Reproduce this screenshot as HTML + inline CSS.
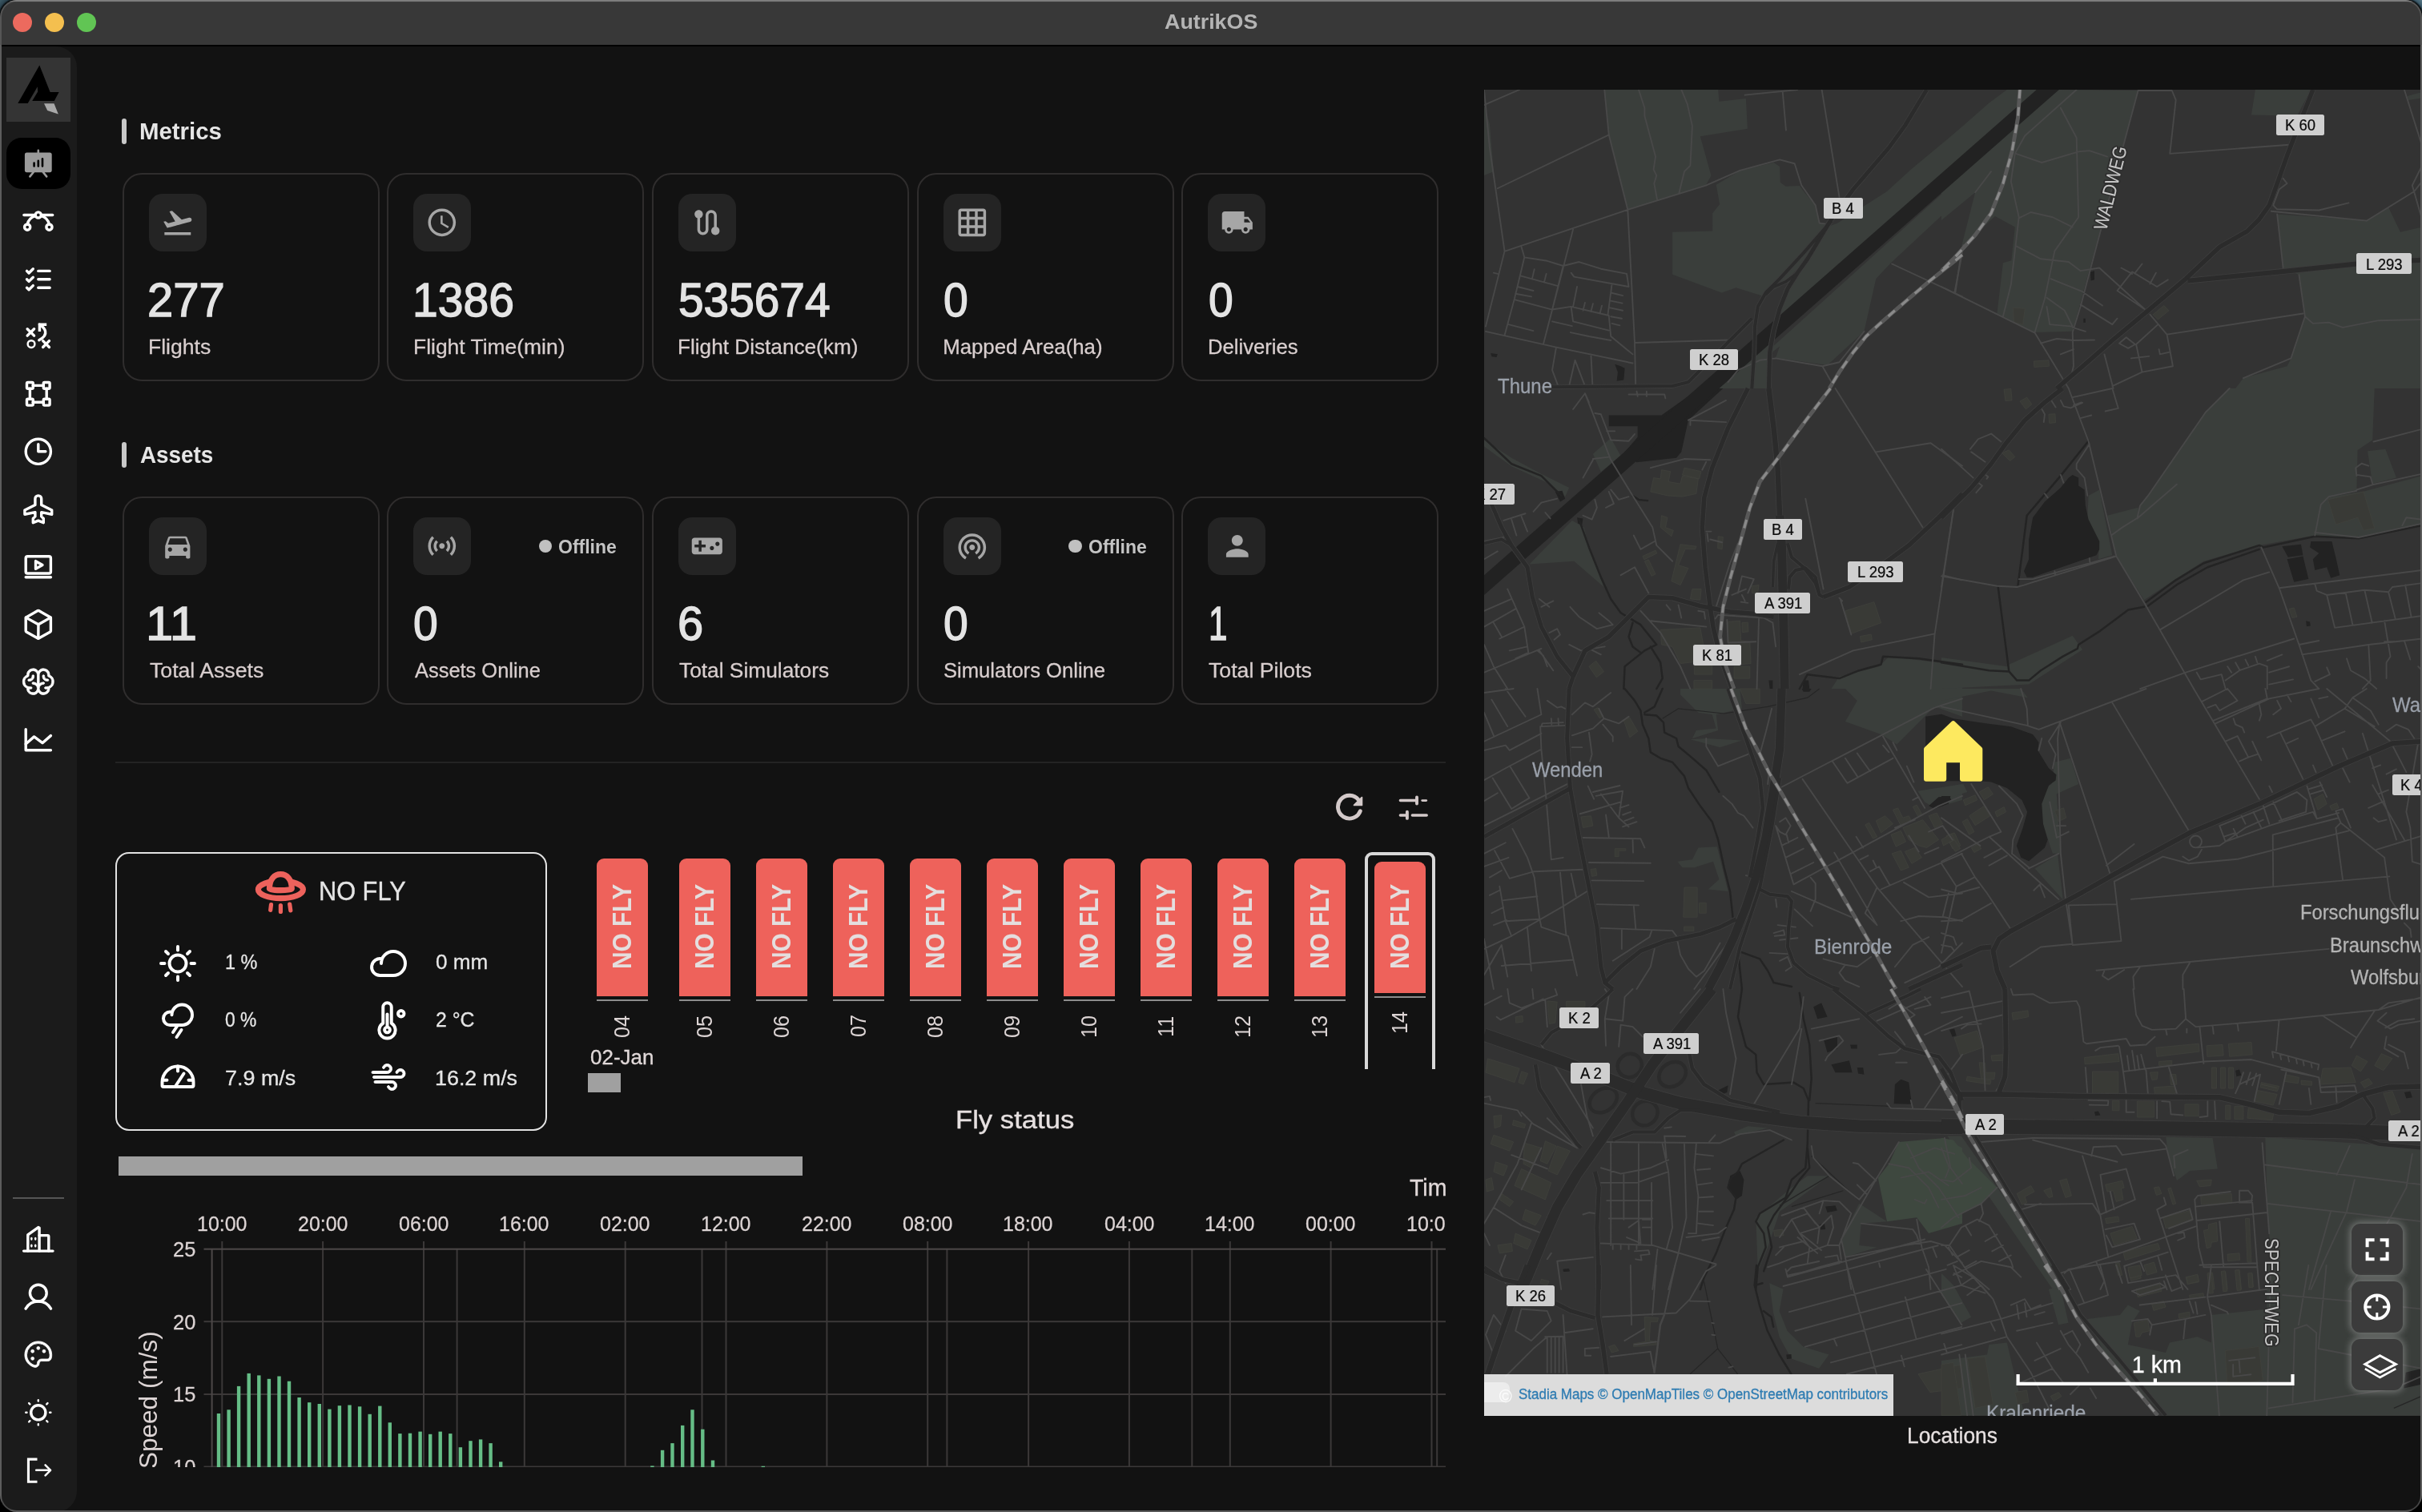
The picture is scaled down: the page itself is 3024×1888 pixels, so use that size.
<!DOCTYPE html>
<html lang="en"><head><meta charset="utf-8"><title>AutrikOS</title>
<style>
html,body{margin:0;padding:0;background:#000;}
body{width:3024px;height:1888px;position:relative;overflow:hidden;font-family:"Liberation Sans", sans-serif;}
.b{position:absolute;box-sizing:border-box;}
.t{position:absolute;white-space:nowrap;transform-origin:0 0;margin:0;padding:0;}
.ic{position:absolute;overflow:visible;}
#win{will-change:transform;position:absolute;left:0;top:0;width:3024px;height:1888px;border-radius:21px;overflow:hidden;background:#121212;}
#clipL{position:absolute;left:0;top:0;width:1805px;height:1888px;overflow:hidden;}
#chart{position:absolute;left:0;top:0;width:1805px;height:1832px;overflow:hidden;}
</style></head><body>
<div class="b" style="left:0px;top:0px;width:40px;height:40px;background:radial-gradient(circle at 21px 21px,#000 21px,#2c4450 24px,#3f5c68 30px);"></div><div class="b" style="left:2984px;top:0px;width:40px;height:40px;background:radial-gradient(circle at 19px 21px,#000 21px,#3a5868 24px,#5a7c8c 30px);"></div><div id="win"><div class="b" style="left:0px;top:0px;width:3024px;height:56px;background:linear-gradient(#9a9a9a 0px,#8a8a8a 1.5px,#3c3c3c 2.5px,#383838 4px);"></div><div class="b" style="left:0px;top:56px;width:3024px;height:2px;background:#000;"></div><div class="b" style="left:16px;top:16px;width:24px;height:24px;background:#ec6a5e;border-radius:50%;"></div><div class="b" style="left:56px;top:16px;width:24px;height:24px;background:#f4bf4f;border-radius:50%;"></div><div class="b" style="left:96px;top:16px;width:24px;height:24px;background:#61c554;border-radius:50%;"></div><span class="t " style="left:1454.03px;top:14.40px;font-size:26.52px;line-height:26.52px;color:#b4b4b4;font-weight:700;transform:scaleX(1.0119);">AutrikOS</span><div class="b" style="left:0px;top:58px;width:96px;height:1830px;background:#1b1b1b;border-radius:0 26px 26px 0;"></div><div class="b" style="left:8px;top:72px;width:80px;height:80px;background:#343434;"></div><svg class="ic" style="left:8px;top:72px" width="80" height="80" viewBox="0 0 80 80"><path fill="#000" d="M41.3,9.4 L54.6,43 L65.6,43 L59.8,54 L32.2,54 L39.2,42.5 L38.8,36.3 L26.7,57 L14.3,57 Z"/><path fill="#a9a9a9" d="M47,57.3 L59.5,57.3 L64.8,70.5 L51.2,66 Z"/></svg><div class="b" style="left:8px;top:172px;width:80px;height:64px;background:#000;border-radius:19px;"></div><svg class="ic" style="left:27.20px;top:183.80px;color:#9a9a9a" width="41.6" height="41.6" viewBox="0 0 256 256"><path fill="currentColor" d="M216,40H136V24a8,8,0,0,0-16,0V40H40A16,16,0,0,0,24,56V176a16,16,0,0,0,16,16H79.36L57.75,219a8,8,0,0,0,12.5,10l29.59-37h56.32l29.59,37a8,8,0,1,0,12.5-10l-21.61-27H216a16,16,0,0,0,16-16V56A16,16,0,0,0,216,40ZM104,144a8,8,0,0,1-16,0V120a8,8,0,0,1,16,0Zm32,0a8,8,0,0,1-16,0V104a8,8,0,0,1,16,0Zm32,0a8,8,0,0,1-16,0V88a8,8,0,0,1,16,0Z"/></svg><svg class="ic" style="left:27.20px;top:255.20px;color:#fff" width="41.6" height="41.6" viewBox="0 0 256 256"><g fill="none" stroke="currentColor" stroke-width="21" stroke-linecap="round" stroke-linejoin="round"><line x1="18" y1="83" x2="238" y2="83"/><circle cx="128" cy="83" r="22" fill="#1b1b1b"/><circle cx="44" cy="176" r="22"/><circle cx="212" cy="176" r="22"/><path d="M151.1,89.5A88.2,88.2,0,0,1,212,154"/><path d="M44,154a88.2,88.2,0,0,1,60.9-64.5"/></g></svg><svg class="ic" style="left:27.20px;top:327.80px;color:#fff" width="41.6" height="41.6" viewBox="0 0 256 256"><g fill="none" stroke="currentColor" stroke-width="21" stroke-linecap="round" stroke-linejoin="round"><line x1="128" y1="128" x2="216" y2="128"/><line x1="128" y1="64" x2="216" y2="64"/><line x1="128" y1="192" x2="216" y2="192"/><polyline points="40 64 56 80 88 48"/><polyline points="40 128 56 144 88 112"/><polyline points="40 192 56 208 88 176"/></g></svg><svg class="ic" style="left:27.20px;top:399.20px;color:#fff" width="41.6" height="41.6" viewBox="0 0 256 256"><g fill="none" stroke="currentColor" stroke-width="21" stroke-linecap="round" stroke-linejoin="round"><circle cx="74" cy="188" r="27" stroke-width="15"/><line x1="44" y1="72" x2="96" y2="124"/><line x1="96" y1="72" x2="44" y2="124"/><line x1="164" y1="164" x2="212" y2="212"/><line x1="212" y1="164" x2="164" y2="212"/><polyline points="138 92 138 38 192 38" stroke-linejoin="miter" stroke-linecap="butt"/><path d="M138,38 C174,60 220,114 134,158"/></g></svg><svg class="ic" style="left:27.20px;top:471.20px;color:#fff" width="41.6" height="41.6" viewBox="0 0 256 256"><g fill="none" stroke="currentColor" stroke-width="21" stroke-linecap="round" stroke-linejoin="round"><rect x="168" y="40" width="48" height="48" rx="8"/><rect x="40" y="40" width="48" height="48" rx="8"/><rect x="168" y="168" width="48" height="48" rx="8"/><rect x="40" y="168" width="48" height="48" rx="8"/><line x1="64" y1="168" x2="64" y2="88"/><line x1="168" y1="192" x2="88" y2="192"/><line x1="192" y1="88" x2="192" y2="168"/><line x1="88" y1="64" x2="168" y2="64"/></g></svg><svg class="ic" style="left:27.20px;top:543.20px;color:#fff" width="41.6" height="41.6" viewBox="0 0 256 256"><g fill="none" stroke="currentColor" stroke-width="21" stroke-linecap="round" stroke-linejoin="round"><circle cx="128" cy="128" r="96"/><polyline points="128 72 128 128 184 128"/></g></svg><svg class="ic" style="left:27.20px;top:615.20px;color:#fff" width="41.6" height="41.6" viewBox="0 0 256 256"><g fill="none" stroke="currentColor" stroke-width="21" stroke-linecap="round" stroke-linejoin="round"><path d="M128,24a24,24,0,0,0-24,24V96L24,136v32l80-16v32L88,200v32l40-16,40,16V200l-16-16V152l80,16V136L152,96V48A24,24,0,0,0,128,24Z"/></g></svg><svg class="ic" style="left:27.20px;top:687.20px;color:#fff" width="41.6" height="41.6" viewBox="0 0 256 256"><g fill="none" stroke="currentColor" stroke-width="21" stroke-linecap="round" stroke-linejoin="round"><rect x="32" y="48" width="192" height="130" rx="14"/><line x1="32" y1="208" x2="224" y2="208"/><path d="M108,84v60l52-30Z"/></g></svg><svg class="ic" style="left:27.20px;top:759.20px;color:#fff" width="41.6" height="41.6" viewBox="0 0 256 256"><g fill="none" stroke="currentColor" stroke-width="21" stroke-linecap="round" stroke-linejoin="round"><path d="M224,177.32V78.68a8,8,0,0,0-4.07-7L132,22.18a8,8,0,0,0-7.94,0l-88,49.5a8,8,0,0,0-4.07,7v98.64a8,8,0,0,0,4.07,7l88,49.5a8,8,0,0,0,7.94,0l88-49.5A8,8,0,0,0,224,177.32Z"/><polyline points="222.9 74.6 128.9 128 33.1 74.6"/><line x1="128.9" y1="128" x2="128" y2="234.8"/></g></svg><svg class="ic" style="left:27.20px;top:831.20px;color:#fff" width="41.6" height="41.6" viewBox="0 0 256 256"><path fill="currentColor" stroke="currentColor" stroke-width="5" stroke-linejoin="round" d="M248,124a56.11,56.11,0,0,0-32-50.61V72a48,48,0,0,0-88-26.49A48,48,0,0,0,40,72v1.39a56,56,0,0,0,0,101.2V176a48,48,0,0,0,88,26.49A48,48,0,0,0,216,176v-1.41A56.09,56.09,0,0,0,248,124ZM88,208a32,32,0,0,1-31.81-28.56A55.87,55.87,0,0,0,64,180h8a8,8,0,0,0,0-16H64A40,40,0,0,1,50.67,86.27,8,8,0,0,0,56,78.73V72a32,32,0,0,1,64,0v68.26A47.8,47.8,0,0,0,88,128a8,8,0,0,0,0,16,32,32,0,0,1,0,64Zm104-44h-8a8,8,0,0,0,0,16h8a55.87,55.87,0,0,0,7.81-.56A32,32,0,1,1,168,144a8,8,0,0,0,0-16,47.8,47.8,0,0,0-32,12.26V72a32,32,0,0,1,64,0v6.73a8,8,0,0,0,5.33,7.54A40,40,0,0,1,192,164Zm16-52a8,8,0,0,1-8,8h-4a36,36,0,0,1-36-36V80a8,8,0,0,1,16,0v4a20,20,0,0,0,20,20h4A8,8,0,0,1,208,112ZM60,120H56a8,8,0,0,1,0-16h4A20,20,0,0,0,80,84V80a8,8,0,0,1,16,0v4A36,36,0,0,1,60,120Z"/></svg><svg class="ic" style="left:27.20px;top:903.20px;color:#fff" width="41.6" height="41.6" viewBox="0 0 256 256"><g fill="none" stroke="currentColor" stroke-width="21" stroke-linecap="round" stroke-linejoin="round"><polyline points="224 208 32 208 32 48"/><polyline points="224 96 160 152 96 104 32 160"/></g></svg><div class="b" style="left:16px;top:1495px;width:64px;height:2px;background:#555;"></div><svg class="ic" style="left:27.20px;top:1527.20px;color:#fff" width="41.6" height="41.6" viewBox="0 0 256 256"><g fill="none" stroke="currentColor" stroke-width="21" stroke-linecap="round" stroke-linejoin="round"><line x1="16" y1="216" x2="240" y2="216"/><path d="M48,216V92L128,34l8,4V216"/><path d="M136,96h64a8,8,0,0,1,8,8V216"/></g><g fill="currentColor"><ellipse cx="76" cy="122" rx="8" ry="13"/><ellipse cx="106" cy="122" rx="8" ry="13"/><ellipse cx="76" cy="176" rx="8" ry="13"/><ellipse cx="106" cy="176" rx="8" ry="13"/></g></svg><svg class="ic" style="left:27.20px;top:1599.20px;color:#fff" width="41.6" height="41.6" viewBox="0 0 256 256"><g fill="none" stroke="currentColor" stroke-width="21" stroke-linecap="round" stroke-linejoin="round"><circle cx="128" cy="96" r="64"/><path d="M31,216a112,112,0,0,1,194,0"/></g></svg><svg class="ic" style="left:27.20px;top:1671.20px;color:#fff" width="41.6" height="41.6" viewBox="0 0 256 256"><path fill="currentColor" stroke="currentColor" stroke-width="5" stroke-linejoin="round" d="M200.77,53.89A103.27,103.27,0,0,0,128,24h-1.07A104,104,0,0,0,24,128c0,43,26.58,79.06,69.36,94.17A32,32,0,0,0,136,192a16,16,0,0,1,16-16h46.21a31.81,31.81,0,0,0,31.2-24.88,104.43,104.43,0,0,0,2.59-24A103.28,103.28,0,0,0,200.77,53.89Zm13,93.71A15.89,15.89,0,0,1,198.21,160H152a32,32,0,0,0-32,32,16,16,0,0,1-21.31,15.07C62.49,194.3,40,164,40,128a88,88,0,0,1,87.09-88h.9a88.35,88.35,0,0,1,88,87.25A88.86,88.86,0,0,1,213.81,147.6ZM140,76a12,12,0,1,1-12-12A12,12,0,0,1,140,76ZM96,100A12,12,0,1,1,84,88,12,12,0,0,1,96,100Zm0,56a12,12,0,1,1-12-12A12,12,0,0,1,96,156Zm88-56a12,12,0,1,1-12-12A12,12,0,0,1,184,100Z"/></svg><svg class="ic" style="left:27.20px;top:1743.20px;color:#fff" width="41.6" height="41.6" viewBox="0 0 256 256"><g fill="none" stroke="currentColor" stroke-width="21" stroke-linecap="round" stroke-linejoin="round"><circle cx="128" cy="128" r="56"/><g stroke-width="14.5"><line x1="128" y1="40" x2="128" y2="32"/><line x1="64" y1="64" x2="56" y2="56"/><line x1="40" y1="128" x2="32" y2="128"/><line x1="64" y1="192" x2="56" y2="200"/><line x1="128" y1="216" x2="128" y2="224"/><line x1="192" y1="192" x2="200" y2="200"/><line x1="216" y1="128" x2="224" y2="128"/><line x1="192" y1="64" x2="200" y2="56"/></g></g></svg><svg class="ic" style="left:27.20px;top:1815.20px;color:#fff" width="41.6" height="41.6" viewBox="0 0 256 256"><g fill="none" stroke="currentColor" stroke-width="19" stroke-linecap="butt" stroke-linejoin="miter"><polyline points="120 44 52 44 52 217 120 217"/></g><g fill="none" stroke="currentColor" stroke-width="15.5" stroke-linecap="round" stroke-linejoin="round"><polyline points="182 88 222 128 182 168"/><line x1="112" y1="128" x2="220" y2="128"/></g></svg><div id="clipL"><div class="b" style="left:152px;top:148px;width:6px;height:32px;background:#c8c8c8;border-radius:3px;"></div><span class="t " style="left:173.59px;top:149.00px;font-size:29.28px;line-height:29.28px;color:#e6e6e6;font-weight:700;transform:scaleX(1.0041);">Metrics</span><div class="b" style="left:152px;top:552px;width:6px;height:32px;background:#c8c8c8;border-radius:3px;"></div><span class="t " style="left:174.80px;top:553.00px;font-size:29.28px;line-height:29.28px;color:#e6e6e6;font-weight:700;transform:scaleX(0.9509);">Assets</span><div class="b" style="left:152.5px;top:216px;width:321px;height:260px;border:2px solid #2f2d2d;border-radius:24px;"></div><div class="b" style="left:185.5px;top:242px;width:72px;height:72px;background:#242424;border-radius:17px;"></div><svg class="ic" style="left:200.70px;top:257.20px" width="41.6" height="41.6" viewBox="0 0 24 24"><path fill="#a6a6a6" d="M2.5 19h19v2h-19v-2zm19.57-9.36c-.21-.8-1.04-1.28-1.84-1.06L14.92 10l-6.9-6.43-1.93.51 4.14 7.17-4.97 1.33-1.97-1.54-1.45.39 2.59 4.49s7.12-1.9 16.57-4.43c.81-.23 1.28-1.05 1.07-1.85z"/></svg><span class="t " style="left:184.20px;top:344.80px;font-size:59.16px;line-height:59.16px;color:#e4e4e4;-webkit-text-stroke:1.4px #e4e4e4;transform:scaleX(0.9796);">277</span><span class="t " style="left:185.02px;top:421.00px;font-size:25.80px;line-height:25.80px;color:#d8cece;-webkit-text-stroke:0.28px #d8cece;transform:scaleX(1.0290);">Flights</span><div class="b" style="left:483.2px;top:216px;width:321px;height:260px;border:2px solid #2f2d2d;border-radius:24px;"></div><div class="b" style="left:516.2px;top:242px;width:72px;height:72px;background:#242424;border-radius:17px;"></div><svg class="ic" style="left:531.40px;top:257.20px" width="41.6" height="41.6" viewBox="0 0 24 24"><path fill="#a6a6a6" d="M11.99 2C6.47 2 2 6.48 2 12s4.47 10 9.99 10C17.52 22 22 17.52 22 12S17.52 2 11.99 2zM12 20c-4.42 0-8-3.58-8-8s3.58-8 8-8 8 3.58 8 8-3.58 8-8 8zm.5-13H11v6l5.25 3.15.75-1.23-4.5-2.67z"/></svg><span class="t " style="left:515.42px;top:344.80px;font-size:59.16px;line-height:59.16px;color:#e4e4e4;-webkit-text-stroke:1.4px #e4e4e4;transform:scaleX(0.9645);">1386</span><span class="t " style="left:515.73px;top:421.00px;font-size:25.80px;line-height:25.80px;color:#d8cece;-webkit-text-stroke:0.28px #d8cece;transform:scaleX(1.0248);">Flight Time(min)</span><div class="b" style="left:813.9px;top:216px;width:321px;height:260px;border:2px solid #2f2d2d;border-radius:24px;"></div><div class="b" style="left:846.9px;top:242px;width:72px;height:72px;background:#242424;border-radius:17px;"></div><svg class="ic" style="left:862.10px;top:257.20px" width="41.6" height="41.6" viewBox="0 0 24 24"><path fill="#a6a6a6" d="M19 15.18V7c0-2.21-1.79-4-4-4s-4 1.79-4 4v10c0 1.1-.9 2-2 2s-2-.9-2-2V8.82C8.16 8.4 9 7.3 9 6c0-1.66-1.34-3-3-3S3 4.34 3 6c0 1.3.84 2.4 2 2.82V17c0 2.21 1.79 4 4 4s4-1.79 4-4V7c0-1.1.9-2 2-2s2 .9 2 2v8.18c-1.16.41-2 1.51-2 2.82 0 1.66 1.34 3 3 3s3-1.34 3-3c0-1.3-.84-2.4-2-2.82z"/></svg><span class="t " style="left:846.63px;top:344.80px;font-size:59.16px;line-height:59.16px;color:#e4e4e4;-webkit-text-stroke:1.4px #e4e4e4;transform:scaleX(0.9598);">535674</span><span class="t " style="left:846.45px;top:421.00px;font-size:25.80px;line-height:25.80px;color:#d8cece;-webkit-text-stroke:0.28px #d8cece;transform:scaleX(1.0147);">Flight Distance(km)</span><div class="b" style="left:1144.6px;top:216px;width:321px;height:260px;border:2px solid #2f2d2d;border-radius:24px;"></div><div class="b" style="left:1177.6px;top:242px;width:72px;height:72px;background:#242424;border-radius:17px;"></div><svg class="ic" style="left:1192.80px;top:257.20px" width="41.6" height="41.6" viewBox="0 0 24 24"><path fill="#a6a6a6" d="M20 2H4c-1.1 0-2 .9-2 2v16c0 1.1.9 2 2 2h16c1.1 0 2-.9 2-2V4c0-1.1-.9-2-2-2zM8 20H4v-4h4v4zm0-6H4v-4h4v4zm0-6H4V4h4v4zm6 12h-4v-4h4v4zm0-6h-4v-4h4v4zm0-6h-4V4h4v4zm6 12h-4v-4h4v4zm0-6h-4v-4h4v4zm0-6h-4V4h4v4z"/></svg><span class="t " style="left:1177.89px;top:344.80px;font-size:59.16px;line-height:59.16px;color:#e4e4e4;-webkit-text-stroke:1.4px #e4e4e4;transform:scaleX(0.9332);">0</span><span class="t " style="left:1177.18px;top:421.00px;font-size:25.80px;line-height:25.80px;color:#d8cece;-webkit-text-stroke:0.28px #d8cece;">Mapped Area(ha)</span><div class="b" style="left:1475.3px;top:216px;width:321px;height:260px;border:2px solid #2f2d2d;border-radius:24px;"></div><div class="b" style="left:1508.3px;top:242px;width:72px;height:72px;background:#242424;border-radius:17px;"></div><svg class="ic" style="left:1523.50px;top:257.20px" width="41.6" height="41.6" viewBox="0 0 24 24"><path fill="#a6a6a6" d="M20 8h-3V4H3c-1.1 0-2 .9-2 2v11h2c0 1.66 1.34 3 3 3s3-1.34 3-3h6c0 1.66 1.34 3 3 3s3-1.34 3-3h2v-5l-3-4zM6 18.5c-.83 0-1.5-.67-1.5-1.5s.67-1.5 1.5-1.5 1.5.67 1.5 1.5-.67 1.5-1.5 1.5zm13.5-9l1.96 2.5H17V9.5h2.5zm-1.5 9c-.83 0-1.5-.67-1.5-1.5s.67-1.5 1.5-1.5 1.5.67 1.5 1.5-.67 1.5-1.5 1.5z"/></svg><span class="t " style="left:1508.59px;top:344.80px;font-size:59.16px;line-height:59.16px;color:#e4e4e4;-webkit-text-stroke:1.4px #e4e4e4;transform:scaleX(0.9332);">0</span><span class="t " style="left:1507.89px;top:421.00px;font-size:25.80px;line-height:25.80px;color:#d8cece;-webkit-text-stroke:0.28px #d8cece;transform:scaleX(0.9949);">Deliveries</span><div class="b" style="left:152.5px;top:620px;width:321px;height:260px;border:2px solid #2f2d2d;border-radius:24px;"></div><div class="b" style="left:185.5px;top:646px;width:72px;height:72px;background:#242424;border-radius:17px;"></div><svg class="ic" style="left:200.70px;top:661.20px" width="41.6" height="41.6" viewBox="0 0 24 24"><path fill="#a6a6a6" d="M18.92 6.01C18.72 5.42 18.16 5 17.5 5h-11c-.66 0-1.21.42-1.42 1.01L3 12v8c0 .55.45 1 1 1h1c.55 0 1-.45 1-1v-1h12v1c0 .55.45 1 1 1h1c.55 0 1-.45 1-1v-8l-2.08-5.99zM6.5 16c-.83 0-1.5-.67-1.5-1.5S5.67 13 6.5 13s1.5.67 1.5 1.5S7.33 16 6.5 16zm11 0c-.83 0-1.5-.67-1.5-1.5s.67-1.5 1.5-1.5 1.5.67 1.5 1.5-.67 1.5-1.5 1.5zM5 11l1.5-4.5h11L19 11H5z"/></svg><span class="t " style="left:182.08px;top:748.80px;font-size:59.16px;line-height:59.16px;color:#e4e4e4;-webkit-text-stroke:1.4px #e4e4e4;transform:scaleX(1.0419);">11</span><span class="t " style="left:186.61px;top:825.00px;font-size:25.80px;line-height:25.80px;color:#d8cece;-webkit-text-stroke:0.28px #d8cece;transform:scaleX(1.0331);">Total Assets</span><div class="b" style="left:483.2px;top:620px;width:321px;height:260px;border:2px solid #2f2d2d;border-radius:24px;"></div><div class="b" style="left:516.2px;top:646px;width:72px;height:72px;background:#242424;border-radius:17px;"></div><svg class="ic" style="left:531.40px;top:661.20px" width="41.6" height="41.6" viewBox="0 0 24 24"><path fill="#a6a6a6" d="M7.76 16.24C6.67 15.16 6 13.66 6 12s.67-3.16 1.76-4.24l1.42 1.42C8.45 9.9 8 10.9 8 12c0 1.1.45 2.1 1.17 2.83l-1.41 1.41zm8.48 0C17.33 15.16 18 13.66 18 12s-.67-3.16-1.76-4.24l-1.42 1.42C15.55 9.9 16 10.9 16 12c0 1.1-.45 2.1-1.17 2.83l1.41 1.41zM12 10c-1.1 0-2 .9-2 2s.9 2 2 2 2-.9 2-2-.9-2-2-2zm8 2c0 2.21-.9 4.21-2.35 5.65l1.42 1.42C20.88 17.26 22 14.76 22 12s-1.12-5.26-2.93-7.07l-1.42 1.42C19.1 7.79 20 9.79 20 12zM6.35 6.35L4.93 4.93C3.12 6.74 2 9.24 2 12s1.12 5.26 2.93 7.07l1.42-1.42C4.9 16.21 4 14.21 4 12s.9-4.21 2.35-5.65z"/></svg><span class="t " style="left:516.49px;top:748.80px;font-size:59.16px;line-height:59.16px;color:#e4e4e4;-webkit-text-stroke:1.4px #e4e4e4;transform:scaleX(0.9332);">0</span><span class="t " style="left:517.84px;top:825.00px;font-size:25.80px;line-height:25.80px;color:#d8cece;-webkit-text-stroke:0.28px #d8cece;transform:scaleX(0.9855);">Assets Online</span><div class="b" style="left:672.7px;top:673.7px;width:16.6px;height:16.6px;background:#c0c0c0;border-radius:50%;"></div><span class="t " style="left:697.48px;top:671.50px;font-size:23.19px;line-height:23.19px;color:#c4c4c4;font-weight:700;transform:scaleX(0.9923);">Offline</span><div class="b" style="left:813.9px;top:620px;width:321px;height:260px;border:2px solid #2f2d2d;border-radius:24px;"></div><div class="b" style="left:846.9px;top:646px;width:72px;height:72px;background:#242424;border-radius:17px;"></div><svg class="ic" style="left:862.10px;top:661.20px" width="41.6" height="41.6" viewBox="0 0 24 24"><path fill="#a6a6a6" d="M21 6H3c-1.1 0-2 .9-2 2v8c0 1.1.9 2 2 2h18c1.1 0 2-.9 2-2V8c0-1.1-.9-2-2-2zm-10 7H8v3H6v-3H3v-2h3V8h2v3h3v2zm4.5 2c-.83 0-1.5-.67-1.5-1.5s.67-1.5 1.5-1.5 1.5.67 1.5 1.5-.67 1.5-1.5 1.5zm4-3c-.83 0-1.5-.67-1.5-1.5S18.67 9 19.5 9s1.5.67 1.5 1.5-.67 1.5-1.5 1.5z"/></svg><span class="t " style="left:846.31px;top:748.80px;font-size:59.16px;line-height:59.16px;color:#e4e4e4;-webkit-text-stroke:1.4px #e4e4e4;transform:scaleX(0.9778);">6</span><span class="t " style="left:848.01px;top:825.00px;font-size:25.80px;line-height:25.80px;color:#d8cece;-webkit-text-stroke:0.28px #d8cece;transform:scaleX(1.0197);">Total Simulators</span><div class="b" style="left:1144.6px;top:620px;width:321px;height:260px;border:2px solid #2f2d2d;border-radius:24px;"></div><div class="b" style="left:1177.6px;top:646px;width:72px;height:72px;background:#242424;border-radius:17px;"></div><svg class="ic" style="left:1192.80px;top:661.20px" width="41.6" height="41.6" viewBox="0 0 24 24"><path fill="#a6a6a6" d="M12 11c-1.1 0-2 .9-2 2s.9 2 2 2 2-.9 2-2-.9-2-2-2zm6 2c0-3.31-2.69-6-6-6s-6 2.69-6 6c0 2.22 1.21 4.15 3 5.19l1-1.74c-1.19-.7-2-1.97-2-3.45 0-2.21 1.79-4 4-4s4 1.79 4 4c0 1.48-.81 2.75-2 3.45l1 1.74c1.79-1.04 3-2.97 3-5.19zM12 3C6.48 3 2 7.48 2 13c0 3.7 2.01 6.92 4.99 8.65l1-1.73C5.61 18.53 4 15.96 4 13c0-4.42 3.58-8 8-8s8 3.58 8 8c0 2.96-1.61 5.53-4 6.92l1 1.73c2.99-1.73 5-4.95 5-8.65 0-5.52-4.48-10-10-10z"/></svg><span class="t " style="left:1177.89px;top:748.80px;font-size:59.16px;line-height:59.16px;color:#e4e4e4;-webkit-text-stroke:1.4px #e4e4e4;transform:scaleX(0.9332);">0</span><span class="t " style="left:1178.09px;top:825.00px;font-size:25.80px;line-height:25.80px;color:#d8cece;-webkit-text-stroke:0.28px #d8cece;transform:scaleX(0.9926);">Simulators Online</span><div class="b" style="left:1334.1px;top:673.7px;width:16.6px;height:16.6px;background:#c0c0c0;border-radius:50%;"></div><span class="t " style="left:1358.88px;top:671.50px;font-size:23.19px;line-height:23.19px;color:#c4c4c4;font-weight:700;transform:scaleX(0.9923);">Offline</span><div class="b" style="left:1475.3px;top:620px;width:321px;height:260px;border:2px solid #2f2d2d;border-radius:24px;"></div><div class="b" style="left:1508.3px;top:646px;width:72px;height:72px;background:#242424;border-radius:17px;"></div><svg class="ic" style="left:1523.50px;top:661.20px" width="41.6" height="41.6" viewBox="0 0 24 24"><path fill="#a6a6a6" d="M12 12c2.21 0 4-1.79 4-4s-1.79-4-4-4-4 1.79-4 4 1.79 4 4 4zm0 2c-2.67 0-8 1.34-8 4v2h16v-2c0-2.66-5.33-4-8-4z"/></svg><span class="t " style="left:1508.84px;top:748.80px;font-size:59.16px;line-height:59.16px;color:#e4e4e4;-webkit-text-stroke:1.4px #e4e4e4;transform:scaleX(0.7111);">1</span><span class="t " style="left:1509.41px;top:825.00px;font-size:25.80px;line-height:25.80px;color:#d8cece;-webkit-text-stroke:0.28px #d8cece;transform:scaleX(1.0333);">Total Pilots</span><div class="b" style="left:144px;top:951px;width:1661px;height:2px;background:#232323;"></div><svg class="ic" style="left:1640px;top:970px" width="170" height="76" viewBox="1640 970 170 76"><g fill="none" stroke="#d3c9c9" stroke-linecap="round" stroke-linejoin="round"><path d="M1698.3,1012.9A14.4,14.4 0 1 1 1696.2,998.7" stroke-width="4.9"/><path d="M1700.4,995.6V1005.4H1690.6Z" fill="#d3c9c9" stroke-width="1.8"/><path d="M1748.4,999.6H1768M1748.4,1017.9H1756M1763.4,1017.9H1781.2" stroke-width="3.5"/><path d="M1769,995.4V1003.6M1756.9,1013.7V1021.9" stroke-width="3.9"/><path d="M1775.8,999.6H1780.7" stroke-width="2.9"/></g></svg><div class="b" style="left:144px;top:1064px;width:538.5px;height:347.5px;border:2.3px solid #e2e2e2;border-radius:17px;"></div><svg class="ic" style="left:310px;top:1080px" width="80" height="70" viewBox="310 1080 80 70"><g fill="none" stroke="#ed625c" stroke-linecap="round" stroke-linejoin="round"><ellipse cx="350.4" cy="1110.8" rx="28" ry="10.9" stroke-width="7.2"/><path fill="#121212" stroke-width="7.2" d="M336.4,1109.7C336.4,1097.9 342.6,1091.7 350.4,1091.7C358.1,1091.7 364.3,1097.9 364.3,1109.7A13.95,1.9 0 0 1 336.4,1109.7Z"/><path stroke-width="5.2" d="M338.5,1129.6L337.7,1136.4M350.4,1130.6V1138.4M361.7,1129L362.8,1136.9"/></g></svg><span class="t " style="left:398.43px;top:1095.90px;font-size:33.33px;line-height:33.33px;color:#e4e4e4;-webkit-text-stroke:0.37px #e4e4e4;transform:scaleX(0.9217);">NO FLY</span><svg class="ic" style="left:197.60px;top:1178.50px;color:#fff" width="48" height="48" viewBox="0 0 256 256"><g fill="none" stroke="currentColor" stroke-width="21" stroke-linecap="round" stroke-linejoin="round"><circle cx="128" cy="128" r="56"/><line x1="128" y1="40" x2="128" y2="16"/><line x1="64" y1="64" x2="48" y2="48"/><line x1="40" y1="128" x2="16" y2="128"/><line x1="64" y1="192" x2="48" y2="208"/><line x1="128" y1="216" x2="128" y2="240"/><line x1="192" y1="192" x2="208" y2="208"/><line x1="216" y1="128" x2="240" y2="128"/><line x1="192" y1="64" x2="208" y2="48"/></g></svg><span class="t " style="left:280.58px;top:1189.00px;font-size:25.07px;line-height:25.07px;color:#e6e6e6;-webkit-text-stroke:0.28px #e6e6e6;transform:scaleX(0.9365);">1 %</span><svg class="ic" style="left:197.60px;top:1250.00px;color:#fff" width="48" height="48" viewBox="0 0 256 256"><g fill="none" stroke="currentColor" stroke-width="21" stroke-linecap="round" stroke-linejoin="round"><line x1="120" y1="240" x2="152" y2="192"/><line x1="96" y1="208" x2="128" y2="160"/><path d="M88,92a68,68,0,1,1,68,68H76a44,44,0,0,1,0-88,43,43,0,0,1,14,2.3"/></g></svg><span class="t " style="left:281.43px;top:1260.50px;font-size:25.07px;line-height:25.07px;color:#e6e6e6;-webkit-text-stroke:0.28px #e6e6e6;transform:scaleX(0.9118);">0 %</span><svg class="ic" style="left:197.60px;top:1321.00px;color:#fff" width="48" height="48" viewBox="0 0 256 256"><g fill="none" stroke="currentColor" stroke-width="21" stroke-linecap="round" stroke-linejoin="round"><path d="M24,184V161.1C24,103.6,70.2,56.2,127.6,56A104,104,0,0,1,232,160v24a8,8,0,0,1-8,8H32A8,8,0,0,1,24,184Z"/><line x1="128" y1="56" x2="128" y2="88"/><line x1="27" y1="148" x2="56" y2="148"/><line x1="229" y1="148" x2="200" y2="148"/><line x1="110" y1="192" x2="168" y2="104"/></g></svg><span class="t " style="left:280.99px;top:1333.50px;font-size:25.07px;line-height:25.07px;color:#e6e6e6;-webkit-text-stroke:0.28px #e6e6e6;transform:scaleX(1.0738);">7.9 m/s</span><svg class="ic" style="left:460.50px;top:1178.50px;color:#fff" width="48" height="48" viewBox="0 0 256 256"><g fill="none" stroke="currentColor" stroke-width="21" stroke-linecap="round" stroke-linejoin="round"><path d="M80,128a80,80,0,1,1,80,80H72A56,56,0,1,1,85.9,97.7"/></g></svg><span class="t " style="left:544.10px;top:1189.00px;font-size:25.07px;line-height:25.07px;color:#e6e6e6;-webkit-text-stroke:0.28px #e6e6e6;transform:scaleX(1.0412);">0 mm</span><svg class="ic" style="left:460.50px;top:1250.00px;color:#fff" width="48" height="48" viewBox="0 0 256 256"><g fill="none" stroke="currentColor" stroke-width="21" stroke-linecap="round" stroke-linejoin="round"><circle cx="212" cy="84" r="20"/><path d="M92,148V40a28,28,0,0,1,56,0V148a54,54,0,1,1-56,0Z"/><circle cx="120" cy="192" r="18"/><line x1="120" y1="172" x2="120" y2="88"/></g></svg><span class="t " style="left:543.90px;top:1260.50px;font-size:25.07px;line-height:25.07px;color:#e6e6e6;-webkit-text-stroke:0.28px #e6e6e6;transform:scaleX(0.9901);">2 °C</span><svg class="ic" style="left:460.50px;top:1321.00px;color:#fff" width="48" height="48" viewBox="0 0 256 256"><path fill="currentColor" stroke="currentColor" stroke-width="5" stroke-linejoin="round" d="M184,184a32,32,0,0,1-32,32c-13.7,0-26.95-8.93-31.5-21.22a8,8,0,0,1,15-5.56C137.74,195.27,145,200,152,200a16,16,0,0,0,0-32H40a8,8,0,0,1,0-16H152A32,32,0,0,1,184,184Zm-64-80a32,32,0,0,0,0-64c-13.7,0-26.95,8.93-31.5,21.22a8,8,0,0,0,15,5.56C105.74,60.73,113,56,120,56a16,16,0,0,1,0,32H24a8,8,0,0,0,0,16Zm88-32c-13.7,0-26.95,8.93-31.5,21.22a8,8,0,0,0,15,5.56C193.74,92.73,201,88,208,88a16,16,0,0,1,0,32H32a8,8,0,0,0,0,16H208a32,32,0,0,0,0-64Z"/></svg><span class="t " style="left:543.12px;top:1333.50px;font-size:25.07px;line-height:25.07px;color:#e6e6e6;-webkit-text-stroke:0.28px #e6e6e6;transform:scaleX(1.0720);">16.2 m/s</span><div class="b" style="left:0;top:0;width:1805px;height:1335px;overflow:hidden"><div class="b" style="left:745px;top:1072px;width:64px;height:172px;background:#ee625b;border-radius:9px 9px 0 0;"></div><div class="b" style="left:745px;top:1248px;width:64px;height:2px;background:#8c8c8c;"></div><span class="t" style="left:760.14px;top:1210.33px;font-size:33.62px;line-height:33.62px;color:#e4dede;transform:rotate(-90deg) scaleX(0.8850);font-weight:700;">NO FLY</span><span class="t" style="left:763.30px;top:1295.69px;font-size:28.00px;line-height:28.00px;color:#dcd4d4;transform:rotate(-90deg) scaleX(0.9050);">04</span><div class="b" style="left:848px;top:1072px;width:64px;height:172px;background:#ee625b;border-radius:9px 9px 0 0;"></div><div class="b" style="left:848px;top:1248px;width:64px;height:2px;background:#8c8c8c;"></div><span class="t" style="left:863.14px;top:1210.33px;font-size:33.62px;line-height:33.62px;color:#e4dede;transform:rotate(-90deg) scaleX(0.8850);font-weight:700;">NO FLY</span><span class="t" style="left:866.30px;top:1295.56px;font-size:28.00px;line-height:28.00px;color:#dcd4d4;transform:rotate(-90deg) scaleX(0.9050);">05</span><div class="b" style="left:944px;top:1072px;width:64px;height:172px;background:#ee625b;border-radius:9px 9px 0 0;"></div><div class="b" style="left:944px;top:1248px;width:64px;height:2px;background:#8c8c8c;"></div><span class="t" style="left:959.14px;top:1210.33px;font-size:33.62px;line-height:33.62px;color:#e4dede;transform:rotate(-90deg) scaleX(0.8850);font-weight:700;">NO FLY</span><span class="t" style="left:962.30px;top:1295.56px;font-size:28.00px;line-height:28.00px;color:#dcd4d4;transform:rotate(-90deg) scaleX(0.9050);">06</span><div class="b" style="left:1040px;top:1072px;width:64px;height:172px;background:#ee625b;border-radius:9px 9px 0 0;"></div><div class="b" style="left:1040px;top:1248px;width:64px;height:2px;background:#8c8c8c;"></div><span class="t" style="left:1055.14px;top:1210.33px;font-size:33.62px;line-height:33.62px;color:#e4dede;transform:rotate(-90deg) scaleX(0.8850);font-weight:700;">NO FLY</span><span class="t" style="left:1058.30px;top:1295.44px;font-size:28.00px;line-height:28.00px;color:#dcd4d4;transform:rotate(-90deg) scaleX(0.9050);">07</span><div class="b" style="left:1136px;top:1072px;width:64px;height:172px;background:#ee625b;border-radius:9px 9px 0 0;"></div><div class="b" style="left:1136px;top:1248px;width:64px;height:2px;background:#8c8c8c;"></div><span class="t" style="left:1151.14px;top:1210.33px;font-size:33.62px;line-height:33.62px;color:#e4dede;transform:rotate(-90deg) scaleX(0.8850);font-weight:700;">NO FLY</span><span class="t" style="left:1154.30px;top:1295.56px;font-size:28.00px;line-height:28.00px;color:#dcd4d4;transform:rotate(-90deg) scaleX(0.9050);">08</span><div class="b" style="left:1232px;top:1072px;width:64px;height:172px;background:#ee625b;border-radius:9px 9px 0 0;"></div><div class="b" style="left:1232px;top:1248px;width:64px;height:2px;background:#8c8c8c;"></div><span class="t" style="left:1247.14px;top:1210.33px;font-size:33.62px;line-height:33.62px;color:#e4dede;transform:rotate(-90deg) scaleX(0.8850);font-weight:700;">NO FLY</span><span class="t" style="left:1250.30px;top:1295.50px;font-size:28.00px;line-height:28.00px;color:#dcd4d4;transform:rotate(-90deg) scaleX(0.9050);">09</span><div class="b" style="left:1328px;top:1072px;width:64px;height:172px;background:#ee625b;border-radius:9px 9px 0 0;"></div><div class="b" style="left:1328px;top:1248px;width:64px;height:2px;background:#8c8c8c;"></div><span class="t" style="left:1343.14px;top:1210.33px;font-size:33.62px;line-height:33.62px;color:#e4dede;transform:rotate(-90deg) scaleX(0.8850);font-weight:700;">NO FLY</span><span class="t" style="left:1346.30px;top:1296.07px;font-size:28.00px;line-height:28.00px;color:#dcd4d4;transform:rotate(-90deg) scaleX(0.9050);">10</span><div class="b" style="left:1424px;top:1072px;width:64px;height:172px;background:#ee625b;border-radius:9px 9px 0 0;"></div><div class="b" style="left:1424px;top:1248px;width:64px;height:2px;background:#8c8c8c;"></div><span class="t" style="left:1439.14px;top:1210.33px;font-size:33.62px;line-height:33.62px;color:#e4dede;transform:rotate(-90deg) scaleX(0.8850);font-weight:700;">NO FLY</span><span class="t" style="left:1442.30px;top:1294.99px;font-size:28.00px;line-height:28.00px;color:#dcd4d4;transform:rotate(-90deg) scaleX(0.9050);">11</span><div class="b" style="left:1520px;top:1072px;width:64px;height:172px;background:#ee625b;border-radius:9px 9px 0 0;"></div><div class="b" style="left:1520px;top:1248px;width:64px;height:2px;background:#8c8c8c;"></div><span class="t" style="left:1535.14px;top:1210.33px;font-size:33.62px;line-height:33.62px;color:#e4dede;transform:rotate(-90deg) scaleX(0.8850);font-weight:700;">NO FLY</span><span class="t" style="left:1538.30px;top:1295.88px;font-size:28.00px;line-height:28.00px;color:#dcd4d4;transform:rotate(-90deg) scaleX(0.9050);">12</span><div class="b" style="left:1616px;top:1072px;width:64px;height:172px;background:#ee625b;border-radius:9px 9px 0 0;"></div><div class="b" style="left:1616px;top:1248px;width:64px;height:2px;background:#8c8c8c;"></div><span class="t" style="left:1631.14px;top:1210.33px;font-size:33.62px;line-height:33.62px;color:#e4dede;transform:rotate(-90deg) scaleX(0.8850);font-weight:700;">NO FLY</span><span class="t" style="left:1634.30px;top:1296.01px;font-size:28.00px;line-height:28.00px;color:#dcd4d4;transform:rotate(-90deg) scaleX(0.9050);">13</span><div class="b" style="left:1704px;top:1064px;width:88px;height:300px;border:4px solid #d8d8d8;border-radius:9px 9px 0 0;"></div><div class="b" style="left:1716px;top:1076px;width:64px;height:164px;background:#ee625b;border-radius:9px 9px 0 0;"></div><div class="b" style="left:1716px;top:1244px;width:64px;height:2px;background:#8c8c8c;"></div><span class="t" style="left:1731.14px;top:1210.33px;font-size:33.62px;line-height:33.62px;color:#e4dede;transform:rotate(-90deg) scaleX(0.8850);font-weight:700;">NO FLY</span><span class="t" style="left:1734.30px;top:1291.43px;font-size:28.00px;line-height:28.00px;color:#dcd4d4;transform:rotate(-90deg) scaleX(0.9050);">14</span></div><span class="t " style="left:737.10px;top:1307.60px;font-size:25.94px;line-height:25.94px;color:#e0d8d8;-webkit-text-stroke:0.29px #e0d8d8;">02-Jan</span><div class="b" style="left:733.5px;top:1340px;width:41.5px;height:23.5px;background:#a0a0a0;"></div><span class="t " style="left:1192.70px;top:1383.00px;font-size:31.30px;line-height:31.30px;color:#e6e0e0;-webkit-text-stroke:0.34px #e6e0e0;transform:scaleX(1.1072);">Fly status</span><div class="b" style="left:148px;top:1444px;width:854px;height:24px;background:#a0a0a0;"></div><span class="t " style="left:1760.10px;top:1467.50px;font-size:30.00px;line-height:30.00px;color:#e0d8d8;-webkit-text-stroke:0.33px #e0d8d8;transform:scaleX(0.9500);">Time</span><div id="chart"><svg class="ic" style="left:0;top:0" width="1805" height="1888" viewBox="0 0 1805 1888"><rect x="276.3" y="1550" width="2" height="282" fill="#3b3838"/><rect x="402.1" y="1550" width="2" height="282" fill="#3b3838"/><rect x="528.0" y="1550" width="2" height="282" fill="#3b3838"/><rect x="653.8" y="1550" width="2" height="282" fill="#3b3838"/><rect x="779.7" y="1550" width="2" height="282" fill="#3b3838"/><rect x="905.5" y="1550" width="2" height="282" fill="#3b3838"/><rect x="1031.4" y="1550" width="2" height="282" fill="#3b3838"/><rect x="1157.2" y="1550" width="2" height="282" fill="#3b3838"/><rect x="1283.1" y="1550" width="2" height="282" fill="#3b3838"/><rect x="1408.9" y="1550" width="2" height="282" fill="#3b3838"/><rect x="1534.8" y="1550" width="2" height="282" fill="#3b3838"/><rect x="1660.6" y="1550" width="2" height="282" fill="#3b3838"/><rect x="1786.5" y="1550" width="2" height="282" fill="#3b3838"/><rect x="569.6" y="1560" width="2" height="272" fill="#3b3838"/><rect x="875.5" y="1560" width="2" height="272" fill="#3b3838"/><rect x="1181.4" y="1560" width="2" height="272" fill="#3b3838"/><rect x="1487.3" y="1560" width="2" height="272" fill="#3b3838"/><rect x="1793.2" y="1560" width="2" height="272" fill="#3b3838"/><rect x="254.5" y="1649.2" width="1560" height="2" fill="#3b3838"/><rect x="254.5" y="1740.0" width="1560" height="2" fill="#3b3838"/><rect x="254.5" y="1830.5" width="1560" height="2" fill="#3b3838"/><rect x="254.5" y="1558.7" width="1560" height="2" fill="#4c4848"/><rect x="263.6" y="1559" width="2" height="280" fill="#4c4848"/><rect x="270.8" y="1765.0" width="4.4" height="75.0" fill="#65bd86"/><rect x="283.4" y="1760.3" width="4.4" height="79.7" fill="#65bd86"/><rect x="295.9" y="1730.9" width="4.4" height="109.1" fill="#65bd86"/><rect x="308.5" y="1714.9" width="4.4" height="125.1" fill="#65bd86"/><rect x="321.1" y="1717.4" width="4.4" height="122.6" fill="#65bd86"/><rect x="333.7" y="1721.8" width="4.4" height="118.2" fill="#65bd86"/><rect x="346.3" y="1718.5" width="4.4" height="121.5" fill="#65bd86"/><rect x="358.8" y="1724.7" width="4.4" height="115.3" fill="#65bd86"/><rect x="371.4" y="1745.0" width="4.4" height="95.0" fill="#65bd86"/><rect x="384.0" y="1751.2" width="4.4" height="88.8" fill="#65bd86"/><rect x="396.6" y="1753.0" width="4.4" height="87.0" fill="#65bd86"/><rect x="409.2" y="1759.6" width="4.4" height="80.4" fill="#65bd86"/><rect x="421.7" y="1755.2" width="4.4" height="84.8" fill="#65bd86"/><rect x="434.3" y="1754.5" width="4.4" height="85.5" fill="#65bd86"/><rect x="446.9" y="1756.3" width="4.4" height="83.7" fill="#65bd86"/><rect x="459.5" y="1765.8" width="4.4" height="74.2" fill="#65bd86"/><rect x="472.1" y="1755.6" width="4.4" height="84.4" fill="#65bd86"/><rect x="484.6" y="1776.3" width="4.4" height="63.7" fill="#65bd86"/><rect x="497.2" y="1790.1" width="4.4" height="49.9" fill="#65bd86"/><rect x="509.8" y="1789.7" width="4.4" height="50.3" fill="#65bd86"/><rect x="522.4" y="1787.6" width="4.4" height="52.4" fill="#65bd86"/><rect x="535.0" y="1790.8" width="4.4" height="49.2" fill="#65bd86"/><rect x="547.5" y="1787.6" width="4.4" height="52.4" fill="#65bd86"/><rect x="560.1" y="1790.1" width="4.4" height="49.9" fill="#65bd86"/><rect x="572.7" y="1807.2" width="4.4" height="32.8" fill="#65bd86"/><rect x="585.3" y="1799.2" width="4.4" height="40.8" fill="#65bd86"/><rect x="597.9" y="1797.4" width="4.4" height="42.6" fill="#65bd86"/><rect x="610.4" y="1802.1" width="4.4" height="37.9" fill="#65bd86"/><rect x="623.0" y="1825.3" width="4.4" height="14.7" fill="#65bd86"/><rect x="812.2" y="1830.4" width="4.4" height="9.6" fill="#65bd86"/><rect x="824.9" y="1810.8" width="4.4" height="29.2" fill="#65bd86"/><rect x="837.3" y="1802.1" width="4.4" height="37.9" fill="#65bd86"/><rect x="850.0" y="1779.9" width="4.4" height="60.1" fill="#65bd86"/><rect x="862.3" y="1760.3" width="4.4" height="79.7" fill="#65bd86"/><rect x="875.1" y="1784.7" width="4.4" height="55.3" fill="#65bd86"/><rect x="887.8" y="1823.5" width="4.4" height="16.5" fill="#65bd86"/><rect x="950.6" y="1830.8" width="4.4" height="9.2" fill="#65bd86"/></svg><span class="t " style="left:245.60px;top:1514.50px;font-size:26.00px;line-height:26.00px;color:#dcd4d4;-webkit-text-stroke:0.29px #dcd4d4;transform:scaleX(0.9600);">10:00</span><span class="t " style="left:371.76px;top:1514.50px;font-size:26.00px;line-height:26.00px;color:#dcd4d4;-webkit-text-stroke:0.29px #dcd4d4;transform:scaleX(0.9600);">20:00</span><span class="t " style="left:497.74px;top:1514.50px;font-size:26.00px;line-height:26.00px;color:#dcd4d4;-webkit-text-stroke:0.29px #dcd4d4;transform:scaleX(0.9600);">06:00</span><span class="t " style="left:623.15px;top:1514.50px;font-size:26.00px;line-height:26.00px;color:#dcd4d4;-webkit-text-stroke:0.29px #dcd4d4;transform:scaleX(0.9600);">16:00</span><span class="t " style="left:749.44px;top:1514.50px;font-size:26.00px;line-height:26.00px;color:#dcd4d4;-webkit-text-stroke:0.29px #dcd4d4;transform:scaleX(0.9600);">02:00</span><span class="t " style="left:874.85px;top:1514.50px;font-size:26.00px;line-height:26.00px;color:#dcd4d4;-webkit-text-stroke:0.29px #dcd4d4;transform:scaleX(0.9600);">12:00</span><span class="t " style="left:1001.01px;top:1514.50px;font-size:26.00px;line-height:26.00px;color:#dcd4d4;-webkit-text-stroke:0.29px #dcd4d4;transform:scaleX(0.9600);">22:00</span><span class="t " style="left:1126.99px;top:1514.50px;font-size:26.00px;line-height:26.00px;color:#dcd4d4;-webkit-text-stroke:0.29px #dcd4d4;transform:scaleX(0.9600);">08:00</span><span class="t " style="left:1252.40px;top:1514.50px;font-size:26.00px;line-height:26.00px;color:#dcd4d4;-webkit-text-stroke:0.29px #dcd4d4;transform:scaleX(0.9600);">18:00</span><span class="t " style="left:1378.69px;top:1514.50px;font-size:26.00px;line-height:26.00px;color:#dcd4d4;-webkit-text-stroke:0.29px #dcd4d4;transform:scaleX(0.9600);">04:00</span><span class="t " style="left:1504.10px;top:1514.50px;font-size:26.00px;line-height:26.00px;color:#dcd4d4;-webkit-text-stroke:0.29px #dcd4d4;transform:scaleX(0.9600);">14:00</span><span class="t " style="left:1630.39px;top:1514.50px;font-size:26.00px;line-height:26.00px;color:#dcd4d4;-webkit-text-stroke:0.29px #dcd4d4;transform:scaleX(0.9600);">00:00</span><span class="t " style="left:1755.80px;top:1514.50px;font-size:26.00px;line-height:26.00px;color:#dcd4d4;-webkit-text-stroke:0.29px #dcd4d4;transform:scaleX(0.9600);">10:00</span><span class="t " style="left:216.06px;top:1547.00px;font-size:26.57px;line-height:26.57px;color:#dcd4d4;-webkit-text-stroke:0.29px #dcd4d4;transform:scaleX(0.9600);">25</span><span class="t " style="left:215.93px;top:1637.50px;font-size:26.57px;line-height:26.57px;color:#dcd4d4;-webkit-text-stroke:0.29px #dcd4d4;transform:scaleX(0.9600);">20</span><span class="t " style="left:216.06px;top:1728.30px;font-size:26.57px;line-height:26.57px;color:#dcd4d4;-webkit-text-stroke:0.29px #dcd4d4;transform:scaleX(0.9600);">15</span><span class="t " style="left:215.93px;top:1818.80px;font-size:26.57px;line-height:26.57px;color:#dcd4d4;-webkit-text-stroke:0.29px #dcd4d4;transform:scaleX(0.9600);">10</span><span class="t" style="left:170.26px;top:1833.72px;font-size:31.00px;line-height:31.00px;color:#dcd4d4;transform:rotate(-90deg) scaleX(1.0167);">Speed (m/s)</span></div></div><div class="b" style="left:1853px;top:112px;width:1169px;height:1656px;overflow:hidden;background:#333"><svg class="ic" style="left:0;top:0" width="1169" height="1656" viewBox="1853 112 1169 1656"><g fill="#3a3e3b"><g transform="translate(1850,110) scale(0.24803)"><path d="M618,8 L1190,8 1195,68 1330,52 1338,205 1100,243 1155,440 1128,490 735,612 640,235Z M1180,487 L1300,415 1470,375 1500,395 1503,475 1530,495 1600,492 1625,525 1680,590 1700,680 1740,690 1600,900 1500,1000 1410,1045 1280,1005 1208,1030 960,938 960,725 1162,720 1162,630 1198,585Z M12,90 L40,180 60,420 12,440Z M2419,195 L2160,410 2040,520 1790,680 1740,700 1600,900 1520,1020 1490,1140 1440,1512 1100,1512 2419,345Z M2419,440 L2419,545 2060,880 1985,960 1925,1225 1740,1395 1480,1358 1500,1300 1232,1512 2419,440Z"/></g><g transform="translate(2424,110) scale(0.24803)"><path d="M240,75 L330,8 480,8 0,432 0,285Z M590,8 L990,12 660,1225 470,1230 280,1135 310,880 352,868 370,700 270,645 100,800 170,525 0,665 0,520Z M1580,8 L1860,8 1790,140 1560,135Z M1690,635 L2140,665 2250,600 2310,725 2419,700 2419,1512 1480,1512 1520,1460 1740,1400 1760,1360 1830,1150 1800,940 1720,905Z M2345,40 L2419,20 2419,50 2350,60Z"/></g><g transform="translate(1850,485) scale(0.24803)"><path d="M240,885 L455,665 515,700 545,820 615,1000 465,870Z M1760,1512 L1800,1450 2000,1400 2050,1350 2419,1395 2419,1512Z M12,260 L150,350 300,430 440,500 420,545 330,475 150,392 12,292Z M560,330 L650,250 700,340 600,420Z"/></g><g transform="translate(2424,485) scale(0.24803)"><path d="M1450,0 L2180,0 2170,260 2095,310 2090,510 1950,545 1910,585 1880,740 1600,790 1320,870 1180,960 1020,1065 880,845 855,740 910,700 990,650 1000,590 1040,540 1330,120Z M740,540 L795,510 860,840 790,860 795,770 735,650Z M835,640 L990,600 990,650 860,740Z M2145,315 L2235,305 2290,450 2170,480Z M1880,740 L1910,585 1950,545 2120,520 2419,440 2419,690 2100,755Z M340,1390 L660,1245 710,1315 440,1490 0,1512 0,1355 330,1400Z"/></g><g transform="translate(1850,860) scale(0.24803)"><path d="M1000,0 L1300,0 1310,100 1180,130 1190,210 1060,250 1080,210 1180,200 1160,130 1090,120 1000,30Z M1130,250 L1310,260 1200,295 1050,255Z M985,870 L1060,860 1090,800 1185,795 1240,1020 1140,1010 1195,960 1165,870 1070,900 1010,900Z M1830,0 L2419,0 2419,140 2280,90 2090,280 2010,230 1830,165 1890,60Z M2195,515 L2419,480 2419,560 2280,600 2230,570Z"/></g><g transform="translate(2424,860) scale(0.24803)"><path d="M570,370 L650,350 690,480 545,545Z M470,905 L585,835 612,1062Z M0,0 L400,0 435,45 250,10 0,60Z M540,490 L575,465 600,830 560,830 510,680 500,580Z M0,500 L110,480 130,520 0,560Z"/></g><g transform="translate(1850,1235) scale(0.24803)"><path d="M1270,720 L1340,690 1440,700 1280,740Z M1380,1150 L1560,1000 1640,940 1750,940 1600,1050 1500,1120 1440,1300 1390,1420Z M1900,1080 L2040,1170 1910,1180 1900,1290 1990,1300 1830,1350 1810,1260Z"/></g><g transform="translate(2424,1235) scale(0.24803)"><path d="M1630,745 L2419,800 2419,1512 1850,1512 1660,1400 1640,1080Z M1130,745 L1365,750 1390,905 1250,915 1185,965 1140,830Z M100,740 L640,1512 560,1512 30,740Z"/></g><g transform="translate(1850,1580) scale(0.24773)"><path d="M1450,90 L1520,120 1500,230 1540,330 1620,410 1750,450 1700,520 1560,470 1500,360 1470,240Z"/></g><g transform="translate(2424,1580) scale(0.24773)"><path d="M1640,0 L2419,0 2419,757 1640,757Z M735,270 L900,250 940,200 1000,230 960,290 940,400 1130,440 1150,390 1290,360 1360,390 1360,250 1640,220 1640,757 1120,757 1000,640 820,440Z M240,400 L330,390 380,600 420,757 0,757 0,480 230,450Z M540,120 L600,110 640,290 590,300Z M0,40 L60,100 150,260 100,290 0,150Z"/></g></g><g fill="#3e483f"><g transform="translate(1850,1235) scale(0.24803)"><path d="M2100,770 L2330,750 2419,800 2419,1180 2250,1230 2190,1150 2040,1170 1995,950 2050,880Z"/></g><g transform="translate(2424,1235) scale(0.24803)"><path d="M0,750 L60,760 130,850 280,1000 200,1080 60,1150 0,1200Z"/></g></g><g fill="#393a36" stroke="#41423d" stroke-width="3"><g transform="translate(2424,110) scale(0.24803)"><path d="M1065,1140 L1120,1095 1145,1120 1090,1165Z M465,1375 L540,1370 542,1400 467,1405Z M360,1105 L420,1110 410,1190 365,1180Z"/></g><g transform="translate(1850,485) scale(0.24803)"><path d="M905,410 L950,418 940,470 1000,480 1010,440 1090,455 1080,530 1010,545 935,540 850,520 865,450 900,455Z M1020,400 L1105,418 1095,455 1010,435Z M1000,785 L1080,795 1075,810 1025,808 990,890 1040,905 1000,990 955,970Z M900,1215 L1100,1205 1130,1370 1000,1385 960,1300 905,1290Z M1240,1175 L1300,1170 1305,1270 1350,1275 1355,1385 1300,1390 1240,1280Z M1830,1120 L1975,1075 2010,1180 1860,1235Z M1060,1010 L1105,1010 1100,1065 1050,1060Z M1270,1400 L1350,1400 1350,1460 1270,1460Z M1070,1395 L1160,1395 1160,1440 1070,1440Z M905,640 L935,650 925,700 965,715 955,745 900,700Z M1190,745 L1215,748 1210,810 1188,805Z M540,1400 L575,1372 615,1425 578,1455Z M810,845 L875,815 882,830 818,862Z M820,870 L840,862 875,935 855,945Z M1310,1180 L1340,1178 1342,1225 1312,1228Z M1905,1248 L1960,1238 1965,1265 1910,1278Z M1360,995 L1395,990 1390,1030 1360,1030Z M1068,1470 L1160,1470 1160,1512 1068,1512Z"/></g><g transform="translate(2424,485) scale(0.24803)"><path d="M315,5 L350,2 355,60 322,63Z M395,65 L430,45 455,80 425,105Z M540,130 L572,128 575,172 543,175Z M1945,560 L2125,520 2180,705 2125,715 2095,650 1985,685Z M1750,1110 L1775,1105 1790,1150 1765,1155Z M305,325 L340,310 370,345 345,365Z"/></g><g transform="translate(1850,860) scale(0.24803)"><path d="M1985,665 L2030,640 2070,680 2010,725Z M2070,610 L2095,600 2120,650 2150,640 2160,660 2110,690Z M2060,735 L2110,715 2135,770 2085,795Z M2120,700 L2220,660 2300,760 2240,800 2200,790 2150,760Z M2130,820 L2180,800 2215,850 2165,880Z M2065,830 L2110,815 2150,900 2110,915Z M2250,640 L2290,625 2320,680 2280,700Z M2340,740 L2380,725 2410,790 2370,805Z M1930,685 L1950,675 1990,745 1970,755Z M2170,595 L2190,585 2215,630 2195,640Z M1020,1000 L1085,1000 1085,1150 1015,1150Z M1095,1078 L1130,1078 1130,1130 1095,1130Z M1018,1198 L1068,1198 1068,1220 1018,1220Z M1300,0 L1400,0 1400,75 1330,75Z M500,645 L550,640 560,690 510,700Z M670,805 L725,805 725,815 690,815 690,845 670,845Z M548,910 L575,905 580,940 555,945Z M715,160 L745,145 785,215 745,245Z M565,105 L585,95 610,135 595,150Z"/></g><g transform="translate(2424,860) scale(0.24803)"><path d="M190,520 L235,495 260,530 215,560Z M110,560 L170,535 180,560 120,588Z M140,640 L215,590 245,640 170,688Z M270,620 L315,595 325,620 280,645Z M105,670 L130,655 165,720 140,735Z M570,615 L615,600 628,650 590,668Z M150,800 L185,780 200,805 165,825Z M0,760 L50,730 65,760 10,790Z M40,775 L65,760 95,805 70,820Z M1875,555 L1920,530 1940,580 1895,610Z M1955,590 L1990,575 2000,600 1965,612Z"/></g><g transform="translate(1850,1235) scale(0.24803)"><path d="M30,350 L190,400 165,470 20,420Z M200,415 L232,425 210,480 185,470Z M60,735 L160,770 140,815 45,780Z M215,775 L300,800 250,900 210,880Z M320,765 L375,790 330,880 295,865Z M380,790 L445,815 380,935 335,915Z M200,905 L350,975 320,1060 165,990Z M70,870 L130,890 110,940 60,920Z M220,1110 L300,1140 270,1190 205,1160Z M170,1230 L250,1265 230,1310 160,1280Z M80,1290 L150,1280 155,1320 90,1330Z M60,640 L100,635 95,690 65,700Z M100,1030 L160,1070 140,1095 90,1060Z M20,960 L50,950 60,1010 25,1020Z M160,660 L220,680 215,700 155,685Z M170,140 L205,135 208,165 172,170Z M330,60 L380,65 370,170 340,175Z M425,62 L520,62 520,90 425,90Z M1470,1215 L1515,1210 1520,1240 1475,1245Z"/></g><g transform="translate(2424,1235) scale(0.24803)"><path d="M65,245 L180,210 205,295 95,335Z M250,335 L310,330 312,360 255,362Z M190,370 L220,372 222,420 270,420 265,455 200,450Z M355,120 L435,108 438,140 360,155Z M720,345 L890,325 895,365 722,378Z M760,415 L890,415 890,525 760,525Z M1080,295 L1295,275 1298,315 1085,340Z M1335,285 L1415,280 1420,335 1338,340Z M1445,275 L1560,268 1565,330 1450,340Z M1070,495 L1175,488 1180,525 1075,530Z M1360,395 L1385,395 1385,500 1360,500Z M1405,395 L1430,395 1430,500 1405,500Z M1445,395 L1470,395 1470,500 1445,500Z M1590,510 L1690,530 1670,585 1575,565Z M1610,470 L1700,490 1690,515 1605,495Z M1920,400 L2060,395 2085,470 1905,480Z M2090,335 L2145,365 2110,415 2065,385Z M2215,325 L2270,350 2225,410 2180,385Z M985,565 L1070,565 1070,645 985,645Z M1225,580 L1295,580 1295,640 1225,640Z M1545,600 L1675,615 1665,660 1540,650Z M860,562 L895,562 895,612 860,612Z M1430,585 L1455,585 1455,655 1430,655Z M1475,590 L1520,590 1520,655 1475,655Z M2225,525 L2270,515 2310,620 2265,635Z M1305,1040 L1460,1030 1463,1075 1308,1085Z M1115,1150 L1250,1115 1265,1165 1130,1205Z M850,1230 L960,1195 985,1255 870,1290Z M825,985 L910,965 920,1000 905,1005 915,1060 880,1070 865,1015 835,1020Z M380,1030 L450,990 468,1020 420,1045 430,1075 405,1085Z M595,965 L630,955 655,1040 625,1050Z M515,1015 L550,1000 560,1045 540,1050Z M915,1325 L1090,1280 1100,1310 925,1365Z M940,1415 L990,1400 1005,1455 955,1470Z M1020,1390 L1070,1375 1085,1425 1035,1440Z M1440,1335 L1500,1330 1502,1365 1442,1370Z M1320,1215 L1345,1210 1345,1185 1385,1175 1390,1270 1360,1275 1355,1300 1335,1305Z M1530,1155 L1550,1155 1560,1375 1540,1375Z M1345,1430 L1365,1428 1375,1512 1355,1512Z M1410,1425 L1430,1423 1440,1512 1420,1512Z M1480,1415 L1500,1413 1510,1512 1490,1512Z M1545,1435 L1565,1433 1570,1500 1550,1500Z M1070,1000 L1095,995 1108,1030 1082,1038Z M1140,1005 L1155,1000 1180,1080 1165,1085Z M1285,965 L1360,960 1355,990 1300,995Z M130,440 L250,460 245,480 125,462Z M825,1155 L890,1145 895,1170 830,1180Z M2110,470 L2150,450 2170,475 2130,498Z M1730,430 L1800,445 1795,475 1728,465Z M1810,460 L1865,465 1865,485 1812,482Z M1610,480 L1690,498Z M1095,365 L1160,360 1160,380 1095,385Z M1050,420 L1090,418 1085,455 1060,458Z M1150,430 L1180,430 1185,480 1155,482Z M875,1380 L895,1378 910,1440 890,1442Z M1230,1450 L1290,1440 1295,1475 1240,1485Z"/></g><g transform="translate(1850,1580) scale(0.24773)"><path d="M300,70 L340,80 330,100 295,92Z M820,260 L890,265 885,285 850,285 845,380 880,385 880,400 765,410 765,395 825,385Z M640,410 L670,400 690,430 655,440Z M2200,548 L2419,500 2419,620 2260,640Z"/></g><g transform="translate(2424,1580) scale(0.24773)"><path d="M980,120 L1100,95 1110,130 990,160Z M940,10 L1000,0 1010,50 950,65Z M1340,40 L1360,38 1370,140 1350,142Z M1410,30 L1430,28 1440,130 1420,132Z M1480,25 L1500,23 1510,125 1490,127Z M1545,40 L1565,38 1570,110 1550,112Z M1235,60 L1290,45 1298,80 1240,95Z M1060,195 L1120,180 1130,210 1070,228Z M970,290 L1040,275 1050,330 1010,340 1000,360 980,360Z M0,500 L60,490 100,757 0,757Z M130,470 L220,460 260,700 170,720Z M1430,430 L1600,410 1620,580 1440,610Z M550,660 L590,640 605,660 565,685Z M370,640 L430,630 440,690 385,700Z M1250,150 L1320,140 1322,160 1252,170Z M1195,245 L1250,235 1252,260 1198,268Z"/></g></g><g fill="#222"><g transform="translate(1850,110) scale(0.24803)"><path d="M670,1390 L700,1400 720,1410 715,1470 680,1475 685,1430Z M45,1335 L80,1340 75,1355 50,1352Z"/></g><g transform="translate(2424,110) scale(0.24803)"><path d="M750,925 L770,920 770,965 752,970Z M715,1160 L725,1160 725,1180 715,1180Z"/></g><g transform="translate(1850,485) scale(0.24803)"><path d="M640,135 L905,135 1095,0 1215,0 1040,160 1005,320 980,350 780,372 720,320 785,245 785,190 640,190Z M370,520 L405,515 420,555 395,570Z M480,650 L510,655 505,685 485,680Z M1620,1470 L1645,1470 1650,1512 1615,1512Z M1445,1470 L1465,1470 1465,1512 1450,1512Z"/></g><g transform="translate(2424,485) scale(0.24803)"><path d="M660,435 L690,450 690,490 720,510 725,590 740,660 795,770 795,810 780,840 460,950 430,950 415,920 440,860 440,760 460,650 520,570 600,500 640,450Z M1715,795 L1810,785 1820,840 1745,850Z M1740,860 L1820,845 1848,960 1775,975Z M1860,770 L1965,770 1985,850 2005,940 1960,955 1940,900 1880,915 1870,860 1900,830 1855,800Z M1835,1170 L1855,1175 1858,1195 1838,1198Z"/></g><g transform="translate(1850,860) scale(0.24803)"><path d="M2250,590 L2300,545 2360,540 2350,580 2280,605Z M1610,0 L1660,0 1650,15 1620,15Z"/></g><g transform="translate(2424,860) scale(0.24803)"><path d="M-80,140 L0,128 60,150 230,175 350,190 460,230 490,270 485,310 540,400 578,432 575,462 540,487 505,580 512,680 535,760 520,800 440,868 400,850 378,790 410,700 432,620 405,560 330,500 250,470 200,465 -80,465Z M0,540 L40,540 50,560 0,590Z"/></g><g transform="translate(1850,1235) scale(0.24803)"><path d="M1670,90 L1710,70 1740,140 1690,150Z M1720,250 L1790,240 1790,300 1740,320Z M1760,380 L1850,360 1865,420 1780,420Z M1855,280 L1890,280 1890,300 1860,300Z M1890,395 L1920,395 1925,430 1895,425Z M2080,480 L2110,455 2150,470 2165,580 2075,578Z M1180,515 L1240,485 1235,520 1200,535Z M1250,940 L1300,915 1320,960 1310,1040 1280,1060 1245,1010Z M1730,1095 L1780,1090 1790,1115 1740,1125Z M1700,1185 L1725,1180 1730,1210 1705,1212Z M410,1410 L440,1408 442,1420 412,1422Z"/></g><g transform="translate(2424,1235) scale(0.24803)"><path d="M40,205 L65,200 75,235 55,240Z M1480,410 L1500,405 1510,435 1485,440Z M770,618 L790,615 800,635 775,638Z M2330,520 L2360,515 2370,545 2340,550Z"/></g><g transform="translate(1850,1580) scale(0.24773)"><path d="M410,20 L440,18 442,30 412,32Z M1535,450 L1560,448 1562,470 1538,472Z"/></g><g transform="translate(2424,1580) scale(0.24773)"><path d="M2330,620 L2340,540 2419,520 2419,600Z"/></g></g><path d="M2571,99.5 L1838,743.8" stroke="#222" stroke-width="18.5" fill="none"/><g fill="none" stroke="#242424" stroke-width="10" stroke-linejoin="round" stroke-linecap="round"><g transform="translate(1850,485) scale(0.24803)"><path d="M12,250 L150,380 300,440 400,540 M490,660 L540,800 600,950 650,1060 700,1130 800,1190 880,1290 820,1320 720,1400 715,1512 M760,540 L790,560 835,565 M760,1180 L740,1250 760,1300 800,1330 M850,1300 L900,1380 910,1460 880,1512 M1600,1512 L1640,1440 1800,1460 1900,1420 2010,1390 2020,1350 2200,1360 2419,1390"/></g><g transform="translate(2424,485) scale(0.24803)"><path d="M2419,690 L2100,755 1880,745 1620,800 1600,790 1320,880 1180,965 1030,1075 M1600,810 L1340,900 1190,985 1040,1095 M1020,1100 L940,1115 880,1160 800,1220 690,1290 685,1310 610,1350 500,1420 440,1470 380,1470 340,1425 240,1420 0,1380 M285,1000 L340,1425 M740,265 L600,440 430,640 410,800 385,990"/></g><g transform="translate(1850,860) scale(0.24803)"><path d="M720,0 L770,60 800,110 810,180 840,250 850,320 900,350 960,370 1020,440 1040,500 1100,590 1160,670 1190,760 1220,900 1250,1020 1265,1160 M910,0 L870,90 820,120 M820,130 L880,135 915,170 920,220 980,250 990,290 1050,340 1130,410 1195,520 M1290,1320 L1400,1360 1440,1420 1470,1480 1560,1500 M1290,1320 L1310,1512"/></g><g transform="translate(1850,1235) scale(0.24803)"><path d="M1310,0 L1290,140 1330,290 1380,330 1385,420 1420,480 1500,475 1570,470 1620,500 1645,560 1640,780 1630,900 1560,960 1530,1050 1400,1130 1380,1170 1420,1230 1430,1300 1390,1400 1380,1512 M1600,20 L1620,150 1650,280 1660,450 1650,560 M1520,760 L1310,880 1290,920 1250,960 1240,1000 1280,1050 1270,1110 1230,1200 1180,1330 1120,1450 1100,1512 M1640,800 L1650,900 1600,960 1560,1020 1470,1140 1440,1200 1460,1300 1420,1420"/></g><g transform="translate(1850,1580) scale(0.24773)"><path d="M1385,0 L1375,100 1400,200 1440,330 1500,450 1560,548 M1420,230 L1460,260 1470,310 M1380,100 L1415,90"/></g></g><g fill="none" stroke="#262626" stroke-width="5" stroke-linejoin="round"><g transform="translate(1850,860) scale(0.24803)"><path d="M910,150 L990,100 1220,125 1440,90 1640,45 1700,0"/></g><g transform="translate(1850,1235) scale(0.24803)"><path d="M1660,840 L1900,1065 M1750,940 L1500,1090 M1820,1015 L1560,1095 M1680,575 L2060,590"/></g><g transform="translate(1850,1580) scale(0.24773)"><path d="M1120,80 L1190,420 1050,548 M1190,420 L1290,548"/></g><g transform="translate(2424,1580) scale(0.24773)"><path d="M2280,720 L2419,660"/></g></g><g fill="none" stroke="#484848" stroke-width="7.6" stroke-linejoin="round" stroke-linecap="round"><g transform="translate(1850,110) scale(0.24803)"><path d="M12,85 L190,8 M12,8 L40,300 115,820 M80,505 L640,235 M115,822 L735,612 1128,490 1300,415 1500,360 1575,380 1610,490 1680,590 1700,680 1740,685 M618,8 L640,235 735,612 770,1280 775,1500 M790,8 L820,100 820,140 875,345 865,410 880,440 868,480 883,560 M1005,8 L1035,80 1060,190 1050,390 1020,420 993,530 M1325,35 L1590,8 M1515,20 L1532,212 M1712,8 L1800,548 M115,822 L20,1200 M460,712 L310,1290 M770,1282 L1250,1268 M20,1225 L375,1305 760,1385 M375,1305 L355,1420 385,1500 M550,1340 L558,1500 M2065,885 L2419,1050 M2419,830 L2380,1030 M1480,1360 L1715,1400 1800,1380 1925,1225 M1715,1400 L1760,1480 M1240,1480 L1290,1420 1400,1370 1480,1360 M215,852 L330,870 410,895 490,875 600,910 730,935 740,1000 M215,852 L165,1060 115,1245 M165,1065 L355,1115 450,1100 640,1145 650,1250 760,1340 M410,895 L355,1115 310,1290 M195,945 L380,995 M180,1000 L260,1020 M170,1035 L250,1050 M450,930 L465,950 740,1000 M480,1000 L460,1100 M655,990 L635,1140 M520,1080 L510,1120 M560,1085 L550,1125 M605,1095 L595,1135 M650,1030 L710,1045 M645,1070 L708,1083 M642,1105 L710,1120 M650,1150 L705,1160 M655,1185 L695,1195 M450,1100 L460,1175 640,1220 M447,1230 L540,1250 650,1270 M135,1190 L260,1222 M355,1175 L455,1198 M200,800 L215,852 M265,912 L255,955 M325,935 L315,975 M60,930 L80,935 M440,1500 L470,1370 520,1500"/></g><g transform="translate(2424,110) scale(0.24803)"><path d="M990,12 L905,330 790,760 700,1100 660,1230 665,1400 650,1460 M990,12 L1160,12 1180,60 1150,330 1750,285 M600,100 L680,250 690,650 570,820 520,1060 470,1230 M680,8 L420,240 370,330 350,470 390,650 350,990 310,1150 M375,330 L505,375 690,320 745,315 835,345 M390,655 L450,625 560,650 660,700 M375,795 L500,860 640,875 700,920 795,905 M550,960 L710,1025 810,1095 M0,1000 L470,1232 560,1380 640,1512 M70,1030 L95,860 110,790 M795,905 L1025,1115 M960,925 L885,1020 1025,1115 M960,925 L1085,1000 1140,965 M905,905 L960,935 M1010,885 L975,930 M1080,930 L1050,985 M700,1090 L860,1190 885,1160 M1050,1140 L1135,1240 1165,1400 1010,1430 980,1290 M1135,1240 L1820,1135 M1690,635 L1720,905 M1800,940 L1830,1150 1760,1360 1520,1460 M1830,1150 L1870,1185 1950,1180 2020,1205 2200,1170 2419,1165 M1660,620 L2140,668 2380,520 2419,470 M1720,455 L1740,480 1700,510 1670,590 1690,610 1900,615 2050,578 M2330,8 L2419,290 M2419,390 L2370,490 2419,660 M820,1340 L865,1512 M980,1290 L1090,1190 M1010,1430 L860,1500 M500,1285 L580,1262 665,1270 770,1268 M600,1340 L665,1315 M250,420 L170,525 M895,1285 L930,1255 975,1290 940,1310 895,1285 M955,1360 L1045,1350 M1095,1315 L1100,1340 1145,1330 M660,1205 L725,1225 M530,1055 L620,1120 660,1200 545,1190 530,1100"/></g><g transform="translate(1850,485) scale(0.24803)"><path d="M520,25 L650,360 760,540 860,700 880,790 960,870 M1780,0 L2220,700 M1985,320 L2260,275 2419,390 M1630,555 L1720,1010 M2375,610 L2280,1240 2260,1512 M2320,940 L2419,965 M1600,1440 L1870,1320 2280,1235 M1230,170 L1050,160 1050,185 M1230,60 L1040,160 M850,400 L1020,355 1150,360 M1130,370 L1110,410 M700,940 L770,900 840,1030 M765,740 L800,810 870,770 M12,1120 L150,1060 M130,1010 L215,1200 90,1260 M12,1200 L170,1110 M60,1180 L100,1250 M12,1290 L60,1400 130,1512 M140,1320 L230,1300 M215,1200 L235,1330 170,1360 M290,1320 L360,1420 M12,1430 L300,1310 M340,1100 L290,1060 M300,1100 L360,1070 M800,1120 L900,1230 1000,1400 1050,1512 M850,1170 L1130,1200 M1175,1160 L1190,1140 1420,1155 1465,1180 1480,1300 M1395,1160 L1385,1512 M1235,1165 L1240,1280 1380,1275 M460,105 L520,25 540,70 M570,125 L600,130 650,260 740,265 770,230 M630,215 L670,215 M560,355 L640,345 M510,450 L560,360 M740,30 L920,30 925,50 M780,15 L785,40 M830,15 L830,40 M625,600 L665,580 640,520 M570,560 L580,600 555,660 510,640 M650,510 L690,560 740,545 M110,665 L220,630 M150,660 L175,740 M200,645 L230,720 M12,770 L110,750 M12,860 L80,820 M260,620 L300,575 380,555 M320,625 L345,655 M445,1100 L490,1150 580,1210 660,1190 M590,1130 L640,1170 660,1190 M440,1290 L500,1320 620,1300 M540,1310 L600,1340 M340,1230 L380,1210 395,1240 365,1265 M280,1320 L310,1345 330,1400 M1290,1030 L1310,945 1370,960 1340,1030 M1260,1040 L1330,1010 M1305,1075 L1340,1080 M1310,1040 L1325,1070 M1130,720 L1155,720 M1135,730 L1140,770 M1150,760 L1210,775 M1180,1100 L1250,880 1290,780 M930,1090 L950,1115 M990,1090 L1005,1155 M1090,1120 L1120,1125 1125,1160 M1800,1055 L1815,1070 M1805,1060 L1860,1240 M2419,530 L2380,560"/></g><g transform="translate(2424,485) scale(0.24803)"><path d="M640,0 L740,265 880,845 1030,1095 1270,1512 M660,45 L860,0 890,100 825,115 M665,85 L705,70 M700,150 L755,135 M600,60 L615,90 650,98 710,72 M0,305 L160,450 M145,305 L185,255 250,228 300,268 M150,320 L220,370 M60,610 L0,1000 M0,945 L280,995 380,1000 415,990 880,845 M1450,0 L1330,120 1040,540 1000,590 985,655 1185,483 M855,740 L910,700 990,650 M1100,1215 L1520,965 1650,925 M1610,800 L1700,1005 1800,1290 1860,1470 1900,1512 M1700,1005 L2419,915 M1880,985 L1890,1020 1940,1040 2130,1015 2250,1025 2270,1000 2419,980 M1940,1040 L1980,1205 2419,1145 M2035,1030 L2070,1190 M2130,1015 L2168,1180 M2250,1025 L2285,1160 M2335,990 L2365,1150 M2230,1170 L2260,1350 2240,1380 2240,1460 M1800,1290 L1900,1270 M1815,1340 L2150,1290 2419,1260 M1230,1430 L1775,1260 M1000,1512 L1230,1430 M2175,268 L2419,205 M2090,510 L2170,485 2419,430 M1880,740 L1910,585 1950,545 2090,515 M2090,440 L2085,400 2115,378 2150,390 M2090,435 L2160,445 2170,480 M2419,660 L2340,650 2320,690 M1880,725 L2100,750 2419,680 M1430,1470 L1500,1420 1600,1385 1640,1400 1640,1512 M1440,1400 L1460,1430 M1480,1380 L1500,1415 M1530,1365 L1545,1395 M1580,1350 L1590,1380 M1640,1370 L1715,1340 M1650,1430 L1750,1400 M1650,1490 L1770,1465 M1285,1430 L1305,1465 1410,1440 1430,1512 M2040,1360 L2060,1420 2130,1460 2190,1512 M2150,1290 L2160,1470 2120,1512 M1940,1405 L1955,1440 1880,1475 M745,280 L680,380 680,405 720,450 735,540 M390,960 L460,960 870,845 M600,435 L615,475 M520,530 L535,550 M570,920 L575,940 M745,855 L748,880 M500,95 L520,130 515,170 M550,55 L575,95 M175,525 L205,490 185,475 M215,430 L235,445 228,455 M2230,1275 L2280,1275 M2330,1270 L2360,1365 M2400,1400 L2419,1420"/></g><g transform="translate(1850,860) scale(0.24803)"><path d="M1510,495 L2280,95 2419,50 M1615,455 L1990,1000 2419,1500 M1480,690 L1570,985 M1570,985 L2300,590 2419,540 M1560,1020 L1860,1150 M1765,365 L1840,475 2070,350 M1830,350 L1890,440 M1890,325 L1955,415 M2020,240 L2230,600 M2020,285 L2050,320 M2010,1010 L2419,830 M2125,975 L2250,1050 2419,1030 M1775,825 L1990,1190 1930,1130 1990,1000 M12,265 L300,130 M12,120 L60,235 M50,55 L130,190 M120,0 L220,140 M12,20 L160,0 M300,130 L280,0 M300,190 L420,185 M12,460 L120,400 300,305 295,190 M12,310 L120,285 140,310 300,225 M145,395 L240,550 150,605 M55,450 L150,605 M12,565 L80,525 M300,305 L325,560 350,860 410,850 M12,690 L430,480 M155,705 L230,850 265,950 290,1150 300,1200 435,1245 480,1445 M12,830 L120,775 M65,815 L140,955 M12,895 L135,850 M40,950 L100,915 M140,955 L265,920 510,910 M90,995 L120,1170 150,1245 M40,1040 L90,1015 M110,1065 L280,1045 M50,1130 L110,1100 M120,1170 L290,1160 M60,1190 L125,1165 M150,1245 L410,1095 530,1020 M395,925 L425,1240 M450,930 L475,1045 M12,1310 L150,1245 M230,1205 L250,1420 M12,1440 L100,1290 130,1450 M100,1395 L460,1365 M12,1260 L60,1512 M510,750 L800,755 820,800 M540,875 L850,878 M555,965 L815,968 M580,1085 L790,1090 M600,1205 L960,1218 980,1245 M760,755 L762,825 M765,1090 L775,1205 M705,1215 L705,1310 M855,1220 L845,1250 660,1370 M625,635 L640,745 M495,630 L700,570 M535,490 L565,555 M560,520 L695,488 M575,540 L710,515 690,650 740,695 M600,530 L690,650 M695,600 L740,585 M710,635 L750,620 M720,665 L765,648 M710,695 L780,670 M455,130 L520,70 560,90 650,20 M455,235 L560,200 615,150 590,100 M610,180 L660,240 660,265 M540,220 L555,330 545,365 M455,295 L505,295 M615,150 L690,175 740,140 M1130,250 L1130,290 1190,390 1340,330 M1460,100 L1430,220 1400,330 M1215,540 L1260,580 1290,625 1320,640 1365,700 M1480,690 L1500,720 1530,735 1555,690 1530,650 1500,670 M1510,790 L1590,750 M1530,850 L1620,805 M1560,930 L1670,875 M1535,735 L1545,775 M1655,950 L1680,980 1680,1060 1655,1120 M1575,1110 L1665,1195 M980,1245 L1000,1340 1040,1410 1080,1450 1120,1420 1200,1280 M870,1310 L850,1400 800,1480 780,1512 M1070,1512 L1230,1290 M1720,1360 L1830,1390 1800,1430 1830,1470 1900,1500 M1830,1390 L1890,1400 1960,1350 M2080,1400 L2170,1290 2250,1250 M2110,1170 L2200,1145 2330,1150 2419,1170 M2350,1030 L2320,1150 M2419,1280 L2300,1400 2130,1480 M330,60 L380,95 400,90 420,100 M300,190 L305,175 410,170 M350,150 L352,180 M385,150 L387,180 M1885,745 L1920,800 M1905,860 L1945,840 M1955,920 L2000,895 2055,990 M1970,865 L1985,895 M1440,480 L1445,430 1490,425 M1330,940 L1350,945 M1380,960 L1400,990 M1480,1060 L1485,1100 M1470,1230 L1520,1215 1525,1240 1475,1245 M1490,1190 L1580,1200 M1500,1265 L1590,1255 M1450,1330 L1540,1335 M1500,1370 L1540,1350 1560,1400 1530,1420 M2140,390 L2175,470 M2070,270 L2090,310 M2170,560 L2200,545 M2080,700 L2180,660 M2150,740 L2200,820 M2230,830 L2300,800 M2250,720 L2320,690 2370,760"/></g><g transform="translate(2424,860) scale(0.24803)"><path d="M0,90 L430,185 490,205 1030,0 M595,170 L850,935 M860,70 L1245,715 M1270,0 L1600,555 M600,170 L540,265 575,330 560,400 M505,250 L490,310 M400,0 L430,100 435,185 M870,970 L905,1270 660,1290 640,1090 880,1085 M595,170 L585,250 600,830 625,1060 660,1290 M870,970 L1115,845 1245,880 1490,858 2050,715 M1670,990 L1668,735 2000,650 M1985,700 L2020,960 M2010,675 L2230,850 2260,1060 2300,1120 M1985,700 L2010,675 1985,615 2020,605 2060,700 M2190,810 L2419,740 M2120,225 L2290,760 M830,890 L970,782 M150,480 L300,720 240,745 590,1060 M290,490 L380,580 410,640 360,760 355,830 440,900 M0,650 L70,700 195,790 M0,870 L240,745 M100,830 L170,950 230,1030 345,1205 M0,880 L75,995 165,950 M75,995 L0,1330 M0,1010 L80,1030 190,1000 M0,1170 L100,1165 250,1080 M215,850 L300,805 M240,890 L330,840 M465,1015 L495,985 520,1050 M440,905 L590,830 M545,570 L580,750 640,720 M580,690 L625,690 M500,1300 L660,1285 M345,1400 L500,1300 M1400,690 L1430,770 1650,690 1870,620 1890,655 2000,625 M1400,690 L1600,610 1790,520 1840,560 1835,620 1700,665 M1215,845 L1245,865 1290,845 1310,810 M1290,800 L1400,790 1530,700 1620,660 M1510,640 L1530,680 M1570,620 L1610,700 M1620,590 L1650,680 M1670,570 L1715,665 M1470,705 L1490,745 M1420,745 L1480,725 M1840,490 L1890,655 M1905,470 L1940,545 M1850,505 L1915,485 M1860,530 L1925,510 M955,1060 L2255,945 M780,1418 L1950,1310 M820,1420 L810,1445 840,1465 920,1415 M1000,1400 L965,1450 970,1512 M1250,1380 L1215,1440 1215,1512 M1380,175 L1520,110 1650,50 1900,0 M1470,150 L1480,180 1515,195 1525,220 M1430,265 L1490,238 1545,345 1500,365 M1565,265 L1610,360 M1545,345 L1590,330 M1640,245 L1860,155 1880,190 2030,100 2070,45 2140,0 M1705,220 L1820,455 M1740,275 L1795,250 M1880,190 L1970,390 M1920,260 L2030,215 M2020,300 L2055,380 M1860,50 L1900,145 M1900,50 L1945,40 M1600,80 L1610,130 1600,160 M1690,60 L1710,100 1670,130 M1740,30 L1760,65 M1940,0 L2260,265 M2070,45 L2160,110 2200,180 M2030,100 L2180,190 M2240,215 L2290,180 2350,205 2380,250 M2260,265 L2340,420 M2170,400 L2210,385 M2170,485 L2330,760 M2240,430 L2290,405 M2200,530 L2250,510 M2150,600 L2230,565 M2175,650 L2200,670 2240,660 M2340,620 L2400,270 M2370,870 L2360,700 2340,620 M2419,885 L2370,870 M1870,385 L1885,420 M2020,400 L2055,470 M1650,490 L1665,520 M1310,65 L1440,0 M1340,95 L1380,80 1400,110 1490,60 1440,0 M1370,160 L1640,50 1630,0 M0,1230 L60,1250 75,1290 M0,1290 L50,1300 65,1320 M2330,1180 L2360,1210 2365,1250"/></g><g transform="translate(1850,1235) scale(0.24803)"><path d="M650,770 L650,1290 M715,935 L715,1160 M790,780 L790,1290 M855,975 L855,1290 M600,770 L1200,775 1300,730 1450,710 1560,760 M600,975 L780,975 940,920 M630,1065 L860,1065 M640,1155 L860,1155 M600,1280 L860,1290 M600,900 L700,930 850,900 940,860 M910,780 L940,920 960,1200 930,1310 M1020,780 L1030,1150 990,1330 940,1512 M1080,780 L1070,900 1090,1040 1080,1230 1040,1230 M1075,830 L1165,840 M1085,910 L1150,905 M1090,985 L1160,975 M1095,1050 L1165,1045 M1095,1120 L1165,1120 M1090,1180 L1165,1190 M1110,1265 L1195,1250 M1030,1250 L1190,1230 1230,1200 M930,1310 L1180,1385 M860,1290 L990,1330 M380,1370 L560,1350 M380,1370 L400,1512 M885,1310 L860,1512 M920,740 L1025,742 M920,700 L955,695 M1145,770 L1175,735 M920,740 L930,850 M12,80 L100,35 M130,0 L140,70 200,95 380,30 370,0 M75,140 L95,155 310,50 M255,0 L260,50 M320,55 L330,190 M620,0 L640,30 620,150 625,285 M625,150 L710,160 720,40 760,0 M700,180 L690,290 M700,180 L760,190 810,240 M1000,120 L1100,0 M1215,0 L1230,120 1280,350 1250,530 M1370,580 L1600,200 1620,40 M1560,480 L1610,200 M1660,200 L1900,150 M1700,260 L1800,235 1820,260 1740,340 1730,360 M1990,160 L2260,40 M2050,100 L2100,70 2180,130 2150,150 M2230,40 L2260,80 2180,100 M2230,230 L2419,140 M2080,215 L2130,280 M2000,330 L2085,320 2130,280 M2085,370 L2140,370 M2040,575 L2060,600 2419,610 M2230,600 L2330,450 2419,330 M2170,600 L2160,560 M1660,790 L1670,850 1750,940 1900,1060 1990,950 M1870,875 L1895,880 1985,965 M1890,985 L1935,1030 M1830,1350 L1810,1260 1990,950 2100,770 M1830,1350 L2130,1290 2260,1270 2330,1290 2419,1380 M1830,1350 L1860,1512 M1540,1450 L1830,1370 2230,1260 M2000,1380 L2005,1400 M2190,1160 L2215,1300 2250,1400 2260,1512 M2270,1300 L2290,1350 M2350,1300 L2370,1340 M1910,1180 L2170,1210 2190,1240 2200,1270 M2180,1060 L2230,1080 2240,1060 M2140,780 L2200,900 2300,1000 2400,1150 M2110,950 L2250,920 2350,990 M2160,850 L2280,800 2380,830 M2050,880 L2150,900 2250,1000 2300,1100 M2330,750 L2360,900 2419,980 M1510,1140 L1620,1100 1720,1065 1800,1070 1860,1130 1800,1290 1810,1360 M1440,1400 L1500,1380 1600,1340 1740,1290 1800,1290 M1530,1410 L1540,1450 1700,1400 1810,1370 M1500,1250 L1560,1160 1640,1130 1700,1200 1690,1280 M1560,1160 L1600,1230 1650,1300 1640,1380 M1600,1230 L1700,1200 1760,1140 1770,1200 1740,1290 M1620,1100 L1680,1180 M1500,1300 L1620,1270 M1480,1340 L1520,1300 M1720,1065 L1700,1130 M1590,1250 L1690,1330 M1610,1235 L1710,1315 M1730,1350 L1790,1340 1800,1380 1745,1395 M200,620 L260,680 480,800 M12,575 L180,610 200,640 M12,545 L40,540 45,560 M250,675 L180,880 60,1100 12,1180 M150,835 L330,905 M60,1100 L200,1190 330,1240 M300,800 L200,1010 M120,1340 L90,1420 120,1480 M12,1230 L40,1290 M330,650 L480,800 M300,280 L330,330 420,470 560,700 M500,480 L530,640 560,740 M510,1135 L540,1125 570,1130 M350,1330 L330,1360 M700,1290 L700,1310 M740,1290 L740,1310 M780,1290 L780,1310 M660,1290 L660,1310 M740,1200 L790,1165 800,1280 730,1250 M810,1160 L850,1160 M810,1200 L850,1200 M770,1320 L840,1315 845,1335 800,1340 805,1365 775,1360"/></g><g transform="translate(2424,1235) scale(0.24803)"><path d="M965,0 L980,130 1010,185 1060,205 1180,200 1230,150 1220,0 M1230,150 L1280,190 1700,155 2200,105 2419,40 M1300,190 L1320,375 M1130,205 L1135,230 M1235,200 L1235,220 M1365,185 L1370,225 M1490,175 L1495,210 M1700,155 L1685,310 M350,0 L360,30 460,25 545,70 680,60 695,90 715,265 730,275 930,250 950,285 1030,280 1075,240 M1920,135 L2090,245 2060,295 M2180,110 L2090,245 M2200,105 L2250,70 2419,45 M2195,160 L2260,200 2300,180 2419,160 M2195,160 L2240,120 M920,415 L1320,365 1560,355 1900,445 1910,520 M895,290 L910,380 930,525 M725,395 L735,525 M1030,410 L1040,530 M1145,395 L1185,525 M935,335 L945,410 M960,310 L975,410 M985,335 L995,405 M1005,330 L1025,405 M775,310 L800,295 890,285 M1665,315 L1900,380 1895,405 M1665,315 L1670,345 M1705,330 L1710,355 M1745,340 L1750,365 M1785,350 L1790,375 M1820,360 L1825,385 M1860,370 L1865,395 M1710,405 L1880,440 M1735,420 L1700,580 M1850,500 L1860,580 M1480,525 L1500,480 1605,430 1575,565 M1520,420 L1500,480 M1555,420 L1535,480 M1585,425 L1565,485 M1910,495 L2080,485 2090,520 M1910,520 L2085,515 M1985,490 L1990,570 M200,770 L460,750 1100,755 1130,790 1170,940 M460,760 L885,870 M755,840 L765,795 880,790 910,835 1130,805 M710,840 L800,1140 840,1350 600,1430 M800,935 L930,905 975,1060 800,1135 M850,1020 L870,1110 M800,935 L830,1125 M420,1085 L760,1080 800,1140 M400,1110 L500,1080 M825,1210 L970,1180 1000,1260 860,1300 830,1240 M840,1350 L1280,1195 M1085,1110 L1130,1085 1120,1050 M1085,1110 L1215,1512 M1100,1155 L1250,1105 1265,1160 1145,1205 M1275,1060 L1290,1040 1455,1020 M1275,1060 L1295,1300 1320,1400 M1280,1095 L1565,1065 M1285,1165 L1640,1125 M1500,1015 L1545,1015 1565,1040 1560,1075 1500,1075 1500,1015 M1565,1075 L1590,1400 1600,1512 M1400,1170 L1420,1400 M1300,1390 L1590,1380 M1320,1400 L1590,1400 M1615,775 L1650,1230 M1630,885 L2419,985 M1640,1080 L2419,1170 M2055,790 L1990,935 M2080,960 L2040,1120 1860,1512 M2370,830 L2340,1000 2260,1150 2050,1512 M1960,1120 L1850,1512 M0,1200 L60,1150 200,1080 280,1000 M40,1290 L100,1200 180,1160 240,1190 350,1370 360,1400 M0,1290 L40,1290 130,1420 240,1512 M120,1190 L150,1240 M220,1270 L280,1235 M255,1320 L310,1290 M290,1370 L350,1340 M85,1345 L140,1315 M120,1400 L175,1370 M30,1390 L80,1370 M60,1440 L200,1370 350,1400 400,1450 M200,1080 L210,1130 190,1170 M600,1430 L650,1512 M780,1375 L820,1470 800,1512 M880,1390 L910,1480 M920,1395 L1140,1325 M920,1395 L940,1480 1180,1440 M1000,1370 L1020,1420 M1090,1345 L1110,1415 M1120,1470 L1135,1512 M1240,1512 L1180,1440 M0,800 L40,900 20,950 M0,960 L60,970 150,900 140,850 M0,1060 L120,1040 200,1000 M0,45 L140,10 M0,120 L160,90 310,60 M0,210 L100,180 310,130 M100,200 L130,180 200,175 M140,10 L160,90 210,290 220,510 M1170,840 L1240,810 M1170,840 L1175,900 M1190,1230 L1220,1225 1225,1250 1190,1265 M740,560 L840,562 838,585 745,583 M930,560 L930,620 970,620 M1085,565 L1085,650 M1110,565 L1150,568 1155,630 1215,635 M1340,565 L1340,640 1300,645 M1375,565 L1380,655 M2235,195 L2300,160 2380,150 M2250,280 L2330,320 2350,400 M2240,240 L2230,300 2300,340"/></g><g transform="translate(1850,1580) scale(0.24773)"><path d="M610,260 L980,240 1050,170 1130,30 1180,0 M750,0 L755,300 M860,250 L880,0 M920,250 L975,0 M1050,180 L1150,182 M1520,105 L2300,-100 M1550,235 L2340,20 M1580,330 L2419,100 M1630,410 L2419,190 M1760,490 L2419,310 M1840,548 L2419,400 M1840,0 L1990,548 M2135,160 L2190,370 M1775,370 L1790,405 M2330,395 L2345,440 M2115,455 L2130,510 M2240,20 L2419,300 M330,360 L330,540 M350,360 L350,540 M370,360 L370,540 M390,360 L390,540 M410,360 L410,540 M320,360 L410,358 M410,250 L430,548 M415,340 L560,320 M520,420 L590,415 M520,420 L520,455 550,455 M650,460 L850,435 870,540 M720,380 L820,320 M770,400 L880,385 M200,220 L330,230 350,280 250,380 170,330 200,220 M60,250 L120,330 60,450 20,350 60,250 M260,420 L330,360 M120,560 L260,420 M1540,30 L1560,10 1700,-20 M1545,50 L1640,30 M2380,40 L2419,60 M1160,290 L1170,292 M1160,350 L1175,352 M1245,515 L1265,510"/></g><g transform="translate(2424,1580) scale(0.24773)"><path d="M0,345 L300,270 560,190 M300,270 L260,170 160,60 60,0 M300,270 L330,360 450,540 560,757 M330,360 L0,450 M380,330 L560,290 M90,450 L130,757 M120,450 L160,757 M1360,0 L1340,160 1360,250 1400,757 M1340,160 L1640,120 M1000,200 L1330,160 M650,30 L720,190 840,150 800,0 M690,200 L840,150 M620,40 L640,20 900,-20 M960,130 L1100,90 1130,110 1000,150 960,130 M1130,50 L1160,130 1210,110 M1060,300 L1230,270 1330,250 M1230,270 L1220,370 M1640,757 L1660,0 M1720,150 L2060,180 M1780,320 L1770,690 M1780,320 L1840,300 1890,340 1880,680 M1650,720 L2280,620 2419,560 M1850,0 L1800,300 M1940,0 L1900,420 M380,600 L560,520 M470,480 L600,420 M100,100 L160,60 M130,150 L200,100 260,170 M60,0 L100,100 220,140 M350,200 L420,170 450,220 500,200 M390,270 L380,200 M430,260 L420,190 M470,250 L520,235 M250,290 L270,330 M600,330 L640,400 700,470 740,540 M620,350 L660,330 700,400 680,440 M480,390 L560,520 620,600 M1450,480 L1580,465 M1470,500 L1470,560 1560,550 M1500,480 L1505,540 M1280,185 L1290,245 M1360,200 L1440,235 1445,245 M1250,180 L1270,240 M960,280 L1040,270 1060,300 1050,350 M2060,180 L2419,220 M1900,420 L2419,520 M750,620 L780,670 M700,600 L650,650"/></g><g transform="translate(2424,860) scale(0.24803)"><circle cx="1280" cy="770" r="30"/></g><g transform="translate(2424,1235) scale(0.24803)"><circle cx="88" cy="527" r="14"/></g><g transform="translate(2424,1235) scale(0.24803)"><circle cx="290" cy="514" r="14"/></g></g><g fill="none" stroke="#464646" stroke-width="10" stroke-linejoin="round" stroke-linecap="round"><g transform="translate(1850,1580) scale(0.24773)"><path d="M870,540 L900,300 920,250"/></g></g><g fill="none" stroke="#2b2b2b" stroke-width="18" stroke-linejoin="round"><g transform="translate(1850,1235) scale(0.24803)"><ellipse cx="745" cy="385" rx="62" ry="58" transform="rotate(-35 745 385)"/></g><g transform="translate(1850,1235) scale(0.24803)"><ellipse cx="960" cy="430" rx="72" ry="58" transform="rotate(-35 960 430)"/></g><g transform="translate(1850,1235) scale(0.24803)"><ellipse cx="612" cy="560" rx="75" ry="55" transform="rotate(-35 612 560)"/></g><g transform="translate(1850,1235) scale(0.24803)"><ellipse cx="822" cy="625" rx="65" ry="60" transform="rotate(-35 822 625)"/></g></g><g fill="none" stroke="#3d3d3d" stroke-linejoin="round" stroke-linecap="butt"><g transform="translate(1850,110) scale(0.24803)"><path d="M2240,8 L2130,190 2050,300 1930,440 1870,510 1760,660 1700,760 1640,860 1590,930 1540,1010 1500,1110 1470,1220 1450,1330 1445,1512" stroke-width="27"/></g><g transform="translate(1850,110) scale(0.24803)"><path d="M1760,670 L1620,830 1500,960 1430,1030 1390,1100 1375,1200 1372,1330 1360,1512" stroke-width="23"/></g><g transform="translate(1850,110) scale(0.24803)"><path d="M1590,930 L1530,975 1470,1000 1430,1040" stroke-width="21"/></g><g transform="translate(1850,110) scale(0.24803)"><path d="M1360,1160 L1250,1270 1100,1420 1040,1480 960,1500 330,1505" stroke-width="23"/></g><g transform="translate(2424,110) scale(0.24803)"><path d="M1870,8 L1790,210 1740,340 1690,480 1650,590 1600,660 1540,720 1400,800 1230,960 1040,1120 860,1270 700,1410 580,1512" stroke-width="29"/></g><g transform="translate(2424,110) scale(0.24803)"><path d="M1240,970 L1700,925 2090,885 2419,865" stroke-width="31"/></g><g transform="translate(1850,485) scale(0.24803)"><path d="M1445,0 L1470,200 1490,400 1500,640" stroke-width="33"/></g><g transform="translate(1850,485) scale(0.24803)"><path d="M1500,640 L1510,800 1515,1000 1520,1200 1525,1512" stroke-width="51"/></g><g transform="translate(1850,485) scale(0.24803)"><path d="M1340,0 L1240,200 1160,400 1120,550 1110,700 1125,900 1150,1100 1165,1200 1200,1350 1260,1512" stroke-width="29"/></g><g transform="translate(1850,485) scale(0.24803)"><path d="M460,1450 L520,1320 640,1250 760,1130 840,1050 960,1055 1100,1095 1250,1125 1380,1135 1470,1150" stroke-width="29"/></g><g transform="translate(1850,485) scale(0.24803)"><path d="M12,480 L40,560 100,700 150,790 230,900 255,1050 300,1200 380,1350 460,1450 440,1512" stroke-width="27"/></g><g transform="translate(1850,485) scale(0.24803)"><path d="M2419,530 L2300,650 2150,790 2000,900 1850,1000 1720,1050" stroke-width="29"/></g><g transform="translate(1850,485) scale(0.24803)"><path d="M1545,1010 L1550,950 1580,915 1630,905 1680,950 1700,1040 1720,1050" stroke-width="23"/></g><g transform="translate(1850,485) scale(0.24803)"><path d="M1540,780 L1560,850 1620,900 1680,980 1700,1040" stroke-width="23"/></g><g transform="translate(1850,485) scale(0.24803)"><path d="M1490,780 L1470,870 1465,1000" stroke-width="21"/></g><g transform="translate(1850,485) scale(0.24803)"><path d="M12,780 L100,760 150,790" stroke-width="21"/></g><g transform="translate(2424,485) scale(0.24803)"><path d="M610,0 L520,70 420,160 330,270 250,380 150,500 60,590 0,650" stroke-width="29"/></g><g transform="translate(1850,860) scale(0.24803)"><path d="M1510,0 L1500,300 1470,500 1430,750 1380,950 1330,1100 1270,1250 1200,1400 1140,1512" stroke-width="49"/></g><g transform="translate(1850,860) scale(0.24803)"><path d="M1240,0 L1330,250 1400,450 1415,600 1390,750 1350,950" stroke-width="25"/></g><g transform="translate(1850,860) scale(0.24803)"><path d="M1500,450 L1460,700 1400,1000 1300,1300 1250,1512" stroke-width="23"/></g><g transform="translate(1850,860) scale(0.24803)"><path d="M440,0 L430,250 445,500 490,750 540,1000 580,1200 600,1400 620,1480 660,1512" stroke-width="27"/></g><g transform="translate(1850,860) scale(0.24803)"><path d="M12,745 L440,505" stroke-width="27"/></g><g transform="translate(1850,860) scale(0.24803)"><path d="M620,1480 L700,1400 800,1320 930,1270 1100,1235 1200,1200 1280,1160" stroke-width="27"/></g><g transform="translate(1850,860) scale(0.24803)"><path d="M1400,1010 L1450,1035 1540,1045 1560,1070 1545,1200 1540,1300 1570,1380 1640,1440 1760,1500 1800,1512" stroke-width="23"/></g><g transform="translate(1850,860) scale(0.24803)"><path d="M2419,1390 L2200,1490 2150,1512" stroke-width="29"/></g><g transform="translate(2424,860) scale(0.24803)"><path d="M2419,265 L2270,275 2000,390 1600,580 1250,725 1000,860 700,1030 350,1220 290,1260 260,1320 280,1420 320,1512" stroke-width="31"/></g><g transform="translate(2424,860) scale(0.24803)"><path d="M250,1300 L200,1305 0,1400" stroke-width="31"/></g><g transform="translate(1850,1235) scale(0.24803)"><path d="M12,230 L300,330 600,440 800,520 1000,575 1300,630 1600,670 1900,690 2419,700" stroke-width="69"/></g><g transform="translate(1850,1235) scale(0.24803)"><path d="M1160,0 L1000,200 860,380 740,560 600,760 480,930 380,1100 300,1280 230,1450 200,1512" stroke-width="59"/></g><g transform="translate(1850,1235) scale(0.24803)"><path d="M1040,300 L1060,400 1120,480 1250,560 1500,620" stroke-width="25"/></g><g transform="translate(1850,1235) scale(0.24803)"><path d="M270,380 L290,500 380,640 480,780 500,800" stroke-width="25"/></g><g transform="translate(1850,1235) scale(0.24803)"><path d="M660,760 L760,720 870,720 940,650 1000,610 1100,610" stroke-width="23"/></g><g transform="translate(1850,1235) scale(0.24803)"><path d="M300,280 L350,220 420,180 560,90 640,20 660,0" stroke-width="23"/></g><g transform="translate(1850,1235) scale(0.24803)"><path d="M570,920 L590,1000 580,1200 590,1512" stroke-width="27"/></g><g transform="translate(1850,1235) scale(0.24803)"><path d="M1770,0 L1920,120 2050,240 2130,300 2230,325 2300,340 2360,420 2400,520 2419,560" stroke-width="25"/></g><g transform="translate(1850,1235) scale(0.24803)"><path d="M1940,125 L2150,30 2210,0" stroke-width="23"/></g><g transform="translate(1850,1235) scale(0.24803)"><path d="M12,1400 L100,1460 200,1480" stroke-width="25"/></g><g transform="translate(2424,1235) scale(0.24803)"><path d="M0,690 L1000,700 2000,715 2419,730" stroke-width="79"/></g><g transform="translate(2424,1235) scale(0.24803)"><path d="M90,530 L290,530 700,540 1400,545 1550,580 1700,620 1850,625 2000,590 2120,530 2250,495 2419,490" stroke-width="33"/></g><g transform="translate(2424,1235) scale(0.24803)"><path d="M320,0 L325,300 320,440 290,520" stroke-width="31"/></g><g transform="translate(2424,1235) scale(0.24803)"><path d="M0,400 L40,470 90,530 90,600 100,640" stroke-width="27"/></g><g transform="translate(2424,1235) scale(0.24803)"><path d="M2120,530 L2170,600 2180,650 2140,690" stroke-width="23"/></g><g transform="translate(2424,1235) scale(0.24803)"><path d="M2050,730 L2200,780 2419,800" stroke-width="25"/></g><g transform="translate(2424,1235) scale(0.24803)"><path d="M170,740 L400,1120 640,1512" stroke-width="21"/></g><g transform="translate(1850,1580) scale(0.24773)"><path d="M590,0 L585,250 610,400 630,548" stroke-width="29"/></g><g transform="translate(1850,1580) scale(0.24773)"><path d="M370,190 L450,230 570,265" stroke-width="27"/></g><g transform="translate(1850,1580) scale(0.24773)"><path d="M230,0 L150,200 80,400 30,548" stroke-width="35"/></g><g transform="translate(1850,1580) scale(0.24773)"><path d="M12,30 L100,70 180,90" stroke-width="25"/></g><g transform="translate(2424,1580) scale(0.24773)"><path d="M560,0 L700,250 900,480 1130,757" stroke-width="23"/></g></g><g fill="none" stroke="#2b2b2b" stroke-linejoin="round" stroke-linecap="butt"><g transform="translate(1850,110) scale(0.24803)"><path d="M2240,8 L2130,190 2050,300 1930,440 1870,510 1760,660 1700,760 1640,860 1590,930 1540,1010 1500,1110 1470,1220 1450,1330 1445,1512" stroke-width="20"/></g><g transform="translate(1850,110) scale(0.24803)"><path d="M1760,670 L1620,830 1500,960 1430,1030 1390,1100 1375,1200 1372,1330 1360,1512" stroke-width="16"/></g><g transform="translate(1850,110) scale(0.24803)"><path d="M1590,930 L1530,975 1470,1000 1430,1040" stroke-width="14"/></g><g transform="translate(1850,110) scale(0.24803)"><path d="M1360,1160 L1250,1270 1100,1420 1040,1480 960,1500 330,1505" stroke-width="16"/></g><g transform="translate(2424,110) scale(0.24803)"><path d="M1870,8 L1790,210 1740,340 1690,480 1650,590 1600,660 1540,720 1400,800 1230,960 1040,1120 860,1270 700,1410 580,1512" stroke-width="22"/></g><g transform="translate(2424,110) scale(0.24803)"><path d="M1240,970 L1700,925 2090,885 2419,865" stroke-width="24"/></g><g transform="translate(1850,485) scale(0.24803)"><path d="M1445,0 L1470,200 1490,400 1500,640" stroke-width="26"/></g><g transform="translate(1850,485) scale(0.24803)"><path d="M1500,640 L1510,800 1515,1000 1520,1200 1525,1512" stroke-width="44"/></g><g transform="translate(1850,485) scale(0.24803)"><path d="M1340,0 L1240,200 1160,400 1120,550 1110,700 1125,900 1150,1100 1165,1200 1200,1350 1260,1512" stroke-width="22"/></g><g transform="translate(1850,485) scale(0.24803)"><path d="M460,1450 L520,1320 640,1250 760,1130 840,1050 960,1055 1100,1095 1250,1125 1380,1135 1470,1150" stroke-width="22"/></g><g transform="translate(1850,485) scale(0.24803)"><path d="M12,480 L40,560 100,700 150,790 230,900 255,1050 300,1200 380,1350 460,1450 440,1512" stroke-width="20"/></g><g transform="translate(1850,485) scale(0.24803)"><path d="M2419,530 L2300,650 2150,790 2000,900 1850,1000 1720,1050" stroke-width="22"/></g><g transform="translate(1850,485) scale(0.24803)"><path d="M1545,1010 L1550,950 1580,915 1630,905 1680,950 1700,1040 1720,1050" stroke-width="16"/></g><g transform="translate(1850,485) scale(0.24803)"><path d="M1540,780 L1560,850 1620,900 1680,980 1700,1040" stroke-width="16"/></g><g transform="translate(1850,485) scale(0.24803)"><path d="M1490,780 L1470,870 1465,1000" stroke-width="14"/></g><g transform="translate(1850,485) scale(0.24803)"><path d="M12,780 L100,760 150,790" stroke-width="14"/></g><g transform="translate(2424,485) scale(0.24803)"><path d="M610,0 L520,70 420,160 330,270 250,380 150,500 60,590 0,650" stroke-width="22"/></g><g transform="translate(1850,860) scale(0.24803)"><path d="M1510,0 L1500,300 1470,500 1430,750 1380,950 1330,1100 1270,1250 1200,1400 1140,1512" stroke-width="42"/></g><g transform="translate(1850,860) scale(0.24803)"><path d="M1240,0 L1330,250 1400,450 1415,600 1390,750 1350,950" stroke-width="18"/></g><g transform="translate(1850,860) scale(0.24803)"><path d="M1500,450 L1460,700 1400,1000 1300,1300 1250,1512" stroke-width="16"/></g><g transform="translate(1850,860) scale(0.24803)"><path d="M440,0 L430,250 445,500 490,750 540,1000 580,1200 600,1400 620,1480 660,1512" stroke-width="20"/></g><g transform="translate(1850,860) scale(0.24803)"><path d="M12,745 L440,505" stroke-width="20"/></g><g transform="translate(1850,860) scale(0.24803)"><path d="M620,1480 L700,1400 800,1320 930,1270 1100,1235 1200,1200 1280,1160" stroke-width="20"/></g><g transform="translate(1850,860) scale(0.24803)"><path d="M1400,1010 L1450,1035 1540,1045 1560,1070 1545,1200 1540,1300 1570,1380 1640,1440 1760,1500 1800,1512" stroke-width="16"/></g><g transform="translate(1850,860) scale(0.24803)"><path d="M2419,1390 L2200,1490 2150,1512" stroke-width="22"/></g><g transform="translate(2424,860) scale(0.24803)"><path d="M2419,265 L2270,275 2000,390 1600,580 1250,725 1000,860 700,1030 350,1220 290,1260 260,1320 280,1420 320,1512" stroke-width="24"/></g><g transform="translate(2424,860) scale(0.24803)"><path d="M250,1300 L200,1305 0,1400" stroke-width="24"/></g><g transform="translate(1850,1235) scale(0.24803)"><path d="M12,230 L300,330 600,440 800,520 1000,575 1300,630 1600,670 1900,690 2419,700" stroke-width="62"/></g><g transform="translate(1850,1235) scale(0.24803)"><path d="M1160,0 L1000,200 860,380 740,560 600,760 480,930 380,1100 300,1280 230,1450 200,1512" stroke-width="52"/></g><g transform="translate(1850,1235) scale(0.24803)"><path d="M1040,300 L1060,400 1120,480 1250,560 1500,620" stroke-width="18"/></g><g transform="translate(1850,1235) scale(0.24803)"><path d="M270,380 L290,500 380,640 480,780 500,800" stroke-width="18"/></g><g transform="translate(1850,1235) scale(0.24803)"><path d="M660,760 L760,720 870,720 940,650 1000,610 1100,610" stroke-width="16"/></g><g transform="translate(1850,1235) scale(0.24803)"><path d="M300,280 L350,220 420,180 560,90 640,20 660,0" stroke-width="16"/></g><g transform="translate(1850,1235) scale(0.24803)"><path d="M570,920 L590,1000 580,1200 590,1512" stroke-width="20"/></g><g transform="translate(1850,1235) scale(0.24803)"><path d="M1770,0 L1920,120 2050,240 2130,300 2230,325 2300,340 2360,420 2400,520 2419,560" stroke-width="18"/></g><g transform="translate(1850,1235) scale(0.24803)"><path d="M1940,125 L2150,30 2210,0" stroke-width="16"/></g><g transform="translate(1850,1235) scale(0.24803)"><path d="M12,1400 L100,1460 200,1480" stroke-width="18"/></g><g transform="translate(2424,1235) scale(0.24803)"><path d="M0,690 L1000,700 2000,715 2419,730" stroke-width="72"/></g><g transform="translate(2424,1235) scale(0.24803)"><path d="M90,530 L290,530 700,540 1400,545 1550,580 1700,620 1850,625 2000,590 2120,530 2250,495 2419,490" stroke-width="26"/></g><g transform="translate(2424,1235) scale(0.24803)"><path d="M320,0 L325,300 320,440 290,520" stroke-width="24"/></g><g transform="translate(2424,1235) scale(0.24803)"><path d="M0,400 L40,470 90,530 90,600 100,640" stroke-width="20"/></g><g transform="translate(2424,1235) scale(0.24803)"><path d="M2120,530 L2170,600 2180,650 2140,690" stroke-width="16"/></g><g transform="translate(2424,1235) scale(0.24803)"><path d="M2050,730 L2200,780 2419,800" stroke-width="18"/></g><g transform="translate(2424,1235) scale(0.24803)"><path d="M170,740 L400,1120 640,1512" stroke-width="14"/></g><g transform="translate(1850,1580) scale(0.24773)"><path d="M590,0 L585,250 610,400 630,548" stroke-width="22"/></g><g transform="translate(1850,1580) scale(0.24773)"><path d="M370,190 L450,230 570,265" stroke-width="20"/></g><g transform="translate(1850,1580) scale(0.24773)"><path d="M230,0 L150,200 80,400 30,548" stroke-width="28"/></g><g transform="translate(1850,1580) scale(0.24773)"><path d="M12,30 L100,70 180,90" stroke-width="18"/></g><g transform="translate(2424,1580) scale(0.24773)"><path d="M560,0 L700,250 900,480 1130,757" stroke-width="16"/></g></g><g fill="none" stroke="#585858" stroke-width="20" stroke-linejoin="round"><g transform="translate(1850,110) scale(0.24803)"><path d="M2419,840 L2250,975 2150,1060 2080,1120 2000,1190 1935,1250 1870,1330 1800,1430 1750,1512"/></g><g transform="translate(2424,110) scale(0.24803)"><path d="M395,8 L385,150 355,320 310,480 250,630 170,740 60,860 0,920"/></g><g transform="translate(1850,485) scale(0.24803)"><path d="M1755,0 L1640,150 1500,340 1400,470 1350,600 1300,780 1250,960 1215,1100 1200,1250 1230,1400 1270,1512"/></g><g transform="translate(1850,860) scale(0.24803)"><path d="M1255,0 L1330,200 1400,330 1445,420 1500,510 1600,680 1720,880 1850,1100 1960,1290 2060,1470 2085,1512"/></g><g transform="translate(1850,1235) scale(0.24803)"><path d="M2060,0 L2130,120 2220,280 2300,430 2380,570 2419,650"/></g><g transform="translate(2424,1235) scale(0.24803)"><path d="M0,470 L60,580 140,740 250,920 380,1130 500,1330 600,1512"/></g><g transform="translate(2424,1580) scale(0.24773)"><path d="M520,0 L600,110 680,260 780,400 900,540 1000,650 1090,757"/></g></g><g fill="none" stroke="#8a8a8a" stroke-width="13" stroke-dasharray="44 44" stroke-linejoin="round"><g transform="translate(1850,110) scale(0.24803)"><path d="M2419,840 L2250,975 2150,1060 2080,1120 2000,1190 1935,1250 1870,1330 1800,1430 1750,1512"/></g><g transform="translate(2424,110) scale(0.24803)"><path d="M395,8 L385,150 355,320 310,480 250,630 170,740 60,860 0,920"/></g><g transform="translate(1850,485) scale(0.24803)"><path d="M1755,0 L1640,150 1500,340 1400,470 1350,600 1300,780 1250,960 1215,1100 1200,1250 1230,1400 1270,1512"/></g><g transform="translate(1850,860) scale(0.24803)"><path d="M1255,0 L1330,200 1400,330 1445,420 1500,510 1600,680 1720,880 1850,1100 1960,1290 2060,1470 2085,1512"/></g><g transform="translate(1850,1235) scale(0.24803)"><path d="M2060,0 L2130,120 2220,280 2300,430 2380,570 2419,650"/></g><g transform="translate(2424,1235) scale(0.24803)"><path d="M0,470 L60,580 140,740 250,920 380,1130 500,1330 600,1512"/></g><g transform="translate(2424,1580) scale(0.24773)"><path d="M520,0 L600,110 680,260 780,400 900,540 1000,650 1090,757"/></g></g><g font-family="Liberation Sans, sans-serif" fill="#c6c6c6" stroke="#2f2f2f" stroke-width="4" paint-order="stroke" stroke-linejoin="round"><text transform="translate(2629.9,288.6) rotate(-76)" font-size="24" textLength="107" lengthAdjust="spacingAndGlyphs">WALDWEG</text><text transform="translate(2828.3,1546) rotate(90)" font-size="24" textLength="135.6" lengthAdjust="spacingAndGlyphs">SPECHTWEG</text></g><path fill="#fde95f" stroke="#fde95f" stroke-width="6" stroke-linejoin="round" d="M2438.7,903.2 L2472.3,935.5 V972.8 H2450 V949.3 H2427.2 V972.8 H2405 V935.5 Z"/><path fill="none" stroke="#fff" stroke-width="4.2" d="M2519.6,1716 V1727.8 H2862.5 V1716 M2690.9,1721.2 V1727.8"/></svg><div class="b" style="left:424.2px;top:135.1px;width:48.4px;height:26px;background:#cfcfcf;border-radius:2.5px"></div><span class="t " style="left:434.36px;top:138.30px;font-size:20.00px;line-height:20.00px;color:#0a0a0a;-webkit-text-stroke:0.22px #0a0a0a;transform:scaleX(0.9250);">B 4</span><div class="b" style="left:257.4px;top:324.1px;width:59.5px;height:26px;background:#cfcfcf;border-radius:2.5px"></div><span class="t " style="left:268.12px;top:327.30px;font-size:20.00px;line-height:20.00px;color:#0a0a0a;-webkit-text-stroke:0.22px #0a0a0a;transform:scaleX(0.9250);">K 28</span><div class="b" style="left:989.2px;top:31.1px;width:59.5px;height:26px;background:#cfcfcf;border-radius:2.5px"></div><span class="t " style="left:999.78px;top:34.30px;font-size:20.00px;line-height:20.00px;color:#0a0a0a;-webkit-text-stroke:0.22px #0a0a0a;transform:scaleX(0.9250);">K 60</span><div class="b" style="left:1089.4px;top:204.3px;width:69px;height:26px;background:#cfcfcf;border-radius:2.5px"></div><span class="t " style="left:1101.03px;top:207.50px;font-size:20.00px;line-height:20.00px;color:#0a0a0a;-webkit-text-stroke:0.22px #0a0a0a;transform:scaleX(0.9250);">L 293</span><div class="b" style="left:-21.5px;top:492.1px;width:59.5px;height:26px;background:#cfcfcf;border-radius:2.5px"></div><span class="t " style="left:-10.79px;top:495.30px;font-size:20.00px;line-height:20.00px;color:#0a0a0a;-webkit-text-stroke:0.22px #0a0a0a;transform:scaleX(0.9250);">K 27</span><div class="b" style="left:349.1px;top:536.1px;width:48.4px;height:26px;background:#cfcfcf;border-radius:2.5px"></div><span class="t " style="left:359.26px;top:539.30px;font-size:20.00px;line-height:20.00px;color:#0a0a0a;-webkit-text-stroke:0.22px #0a0a0a;transform:scaleX(0.9250);">B 4</span><div class="b" style="left:454.4px;top:589.2px;width:69px;height:26px;background:#cfcfcf;border-radius:2.5px"></div><span class="t " style="left:466.03px;top:592.40px;font-size:20.00px;line-height:20.00px;color:#0a0a0a;-webkit-text-stroke:0.22px #0a0a0a;transform:scaleX(0.9250);">L 293</span><div class="b" style="left:338.3px;top:627.9px;width:69px;height:26px;background:#cfcfcf;border-radius:2.5px"></div><span class="t " style="left:349.88px;top:631.10px;font-size:20.00px;line-height:20.00px;color:#0a0a0a;-webkit-text-stroke:0.22px #0a0a0a;transform:scaleX(0.9250);">A 391</span><div class="b" style="left:261.2px;top:693.1px;width:59.5px;height:26px;background:#cfcfcf;border-radius:2.5px"></div><span class="t " style="left:271.87px;top:696.30px;font-size:20.00px;line-height:20.00px;color:#0a0a0a;-webkit-text-stroke:0.22px #0a0a0a;transform:scaleX(0.9250);">K 81</span><div class="b" style="left:1133.6px;top:855.0px;width:59.5px;height:26px;background:#cfcfcf;border-radius:2.5px"></div><span class="t " style="left:1144.31px;top:858.20px;font-size:20.00px;line-height:20.00px;color:#0a0a0a;-webkit-text-stroke:0.22px #0a0a0a;transform:scaleX(0.9250);">K 47</span><div class="b" style="left:94.3px;top:1146.2px;width:48.4px;height:26px;background:#cfcfcf;border-radius:2.5px"></div><span class="t " style="left:104.65px;top:1149.40px;font-size:20.00px;line-height:20.00px;color:#0a0a0a;-webkit-text-stroke:0.22px #0a0a0a;transform:scaleX(0.9250);">K 2</span><div class="b" style="left:199.4px;top:1178.0px;width:69px;height:26px;background:#cfcfcf;border-radius:2.5px"></div><span class="t " style="left:210.98px;top:1181.20px;font-size:20.00px;line-height:20.00px;color:#0a0a0a;-webkit-text-stroke:0.22px #0a0a0a;transform:scaleX(0.9250);">A 391</span><div class="b" style="left:108.2px;top:1215.2px;width:48.4px;height:26px;background:#cfcfcf;border-radius:2.5px"></div><span class="t " style="left:119.80px;top:1218.40px;font-size:20.00px;line-height:20.00px;color:#0a0a0a;-webkit-text-stroke:0.22px #0a0a0a;transform:scaleX(0.9250);">A 2</span><div class="b" style="left:601.1px;top:1278.9px;width:48.4px;height:26px;background:#cfcfcf;border-radius:2.5px"></div><span class="t " style="left:612.70px;top:1282.10px;font-size:20.00px;line-height:20.00px;color:#0a0a0a;-webkit-text-stroke:0.22px #0a0a0a;transform:scaleX(0.9250);">A 2</span><div class="b" style="left:1129.4px;top:1286.8px;width:48.4px;height:26px;background:#cfcfcf;border-radius:2.5px"></div><span class="t " style="left:1141.00px;top:1290.00px;font-size:20.00px;line-height:20.00px;color:#0a0a0a;-webkit-text-stroke:0.22px #0a0a0a;transform:scaleX(0.9250);">A 2</span><div class="b" style="left:28.2px;top:1492.9px;width:59.5px;height:26px;background:#cfcfcf;border-radius:2.5px"></div><span class="t " style="left:38.82px;top:1496.10px;font-size:20.00px;line-height:20.00px;color:#0a0a0a;-webkit-text-stroke:0.22px #0a0a0a;transform:scaleX(0.9250);">K 26</span><span class="t " style="left:17.47px;top:356.50px;font-size:26.09px;line-height:26.09px;color:#9aa0aa;-webkit-text-stroke:0.29px #9aa0aa;transform:scaleX(0.9190);">Thune</span><span class="t " style="left:60.22px;top:837.40px;font-size:25.22px;line-height:25.22px;color:#9aa0aa;-webkit-text-stroke:0.28px #9aa0aa;transform:scaleX(0.9439);">Wenden</span><span class="t " style="left:411.90px;top:1058.10px;font-size:25.22px;line-height:25.22px;color:#9aa0aa;-webkit-text-stroke:0.28px #9aa0aa;transform:scaleX(0.9622);">Bienrode</span><span class="t " style="left:1134.02px;top:755.50px;font-size:25.22px;line-height:25.22px;color:#9aa0aa;-webkit-text-stroke:0.28px #9aa0aa;transform:scaleX(0.9500);">Waggum</span><span class="t " style="left:1019.44px;top:1015.20px;font-size:25.22px;line-height:25.22px;color:#b4b4b4;-webkit-text-stroke:0.28px #b4b4b4;transform:scaleX(0.9400);">Forschungsflughafen</span><span class="t " style="left:1055.84px;top:1055.60px;font-size:25.22px;line-height:25.22px;color:#b4b4b4;-webkit-text-stroke:0.28px #b4b4b4;transform:scaleX(0.9400);">Braunschweig-</span><span class="t " style="left:1082.42px;top:1096.10px;font-size:25.22px;line-height:25.22px;color:#b4b4b4;-webkit-text-stroke:0.28px #b4b4b4;transform:scaleX(0.9400);">Wolfsburg</span><span class="t " style="left:626.70px;top:1639.80px;font-size:25.22px;line-height:25.22px;color:#9aa0aa;-webkit-text-stroke:0.28px #9aa0aa;transform:scaleX(0.9625);">Kralenriede</span><span class="t " style="left:808.80px;top:1578.30px;font-size:28.70px;line-height:28.70px;color:#fff;-webkit-text-stroke:0.32px #fff;">1 km</span><div class="b" style="left:0;top:1604px;width:511px;height:52px;background:rgba(255,255,255,.83)"></div><div class="b" style="left:0;top:1614px;width:32px;height:25px;background:rgba(255,255,255,.45);border-radius:0 8px 8px 0"></div><span class="t " style="left:18.79px;top:1620.50px;font-size:21.74px;line-height:21.74px;color:rgba(255,255,255,.8);-webkit-text-stroke:0.24px rgba(255,255,255,.8);">©</span><span class="t " style="left:43.41px;top:1620.20px;font-size:18.70px;line-height:18.70px;color:#2f7cb2;-webkit-text-stroke:0.35px #2f7cb2;transform:scaleX(0.9084);">Stadia Maps © OpenMapTiles © OpenStreetMap contributors</span><div class="b" style="left:1083px;top:1416px;width:64px;height:64px;background:#3b3b3b;border-radius:11px;box-shadow:0 0 9px 2px rgba(255,255,255,.30)"></div><div class="b" style="left:1083px;top:1488px;width:64px;height:64px;background:#3b3b3b;border-radius:11px;box-shadow:0 0 9px 2px rgba(255,255,255,.30)"></div><div class="b" style="left:1083px;top:1560px;width:64px;height:64px;background:#3b3b3b;border-radius:11px;box-shadow:0 0 9px 2px rgba(255,255,255,.30)"></div><svg class="ic" style="left:1083px;top:1416px" width="64" height="208" viewBox="2936 1528 64 208"><g fill="none" stroke="#fff" stroke-width="4"><path d="M2955.6,1557.3V1548.3H2964.6 M2971.6,1548.3H2980.6V1557.3 M2980.6,1563.3V1572.3H2971.6 M2964.6,1572.3H2955.6V1563.3"/><circle cx="2967.8" cy="1632" r="14.6"/><path stroke-width="3" d="M2967.8,1617.4v7.5M2967.8,1646.6v-7.5M2953.2,1632h7.5M2982.4,1632h-7.5"/><path stroke-width="3" stroke-linejoin="miter" d="M2971.5,1692.7L2991.3,1703.4L2971.5,1713.8L2952.9,1703.4Z"/><path stroke-width="2.6" d="M2952.9,1709.2L2971.5,1720L2991.3,1709.2"/></g></svg></div><span class="t " style="left:2380.79px;top:1779.60px;font-size:26.81px;line-height:26.81px;color:#e6e0e0;-webkit-text-stroke:0.29px #e6e0e0;transform:scaleX(0.9850);">Locations</span><div class="b" style="left:0px;top:56px;width:2px;height:1832px;background:#4a4a4a;"></div><div class="b" style="left:3022px;top:56px;width:2px;height:1832px;background:#4a4a4a;"></div><div class="b" style="left:0px;top:1886px;width:3024px;height:2px;background:#3e3e3e;"></div><div class="b" style="left:0;top:0;width:3024px;height:1888px;border-radius:21px;box-shadow:inset 0 0 0 2px rgba(110,110,110,.55);pointer-events:none"></div></div></body></html>
